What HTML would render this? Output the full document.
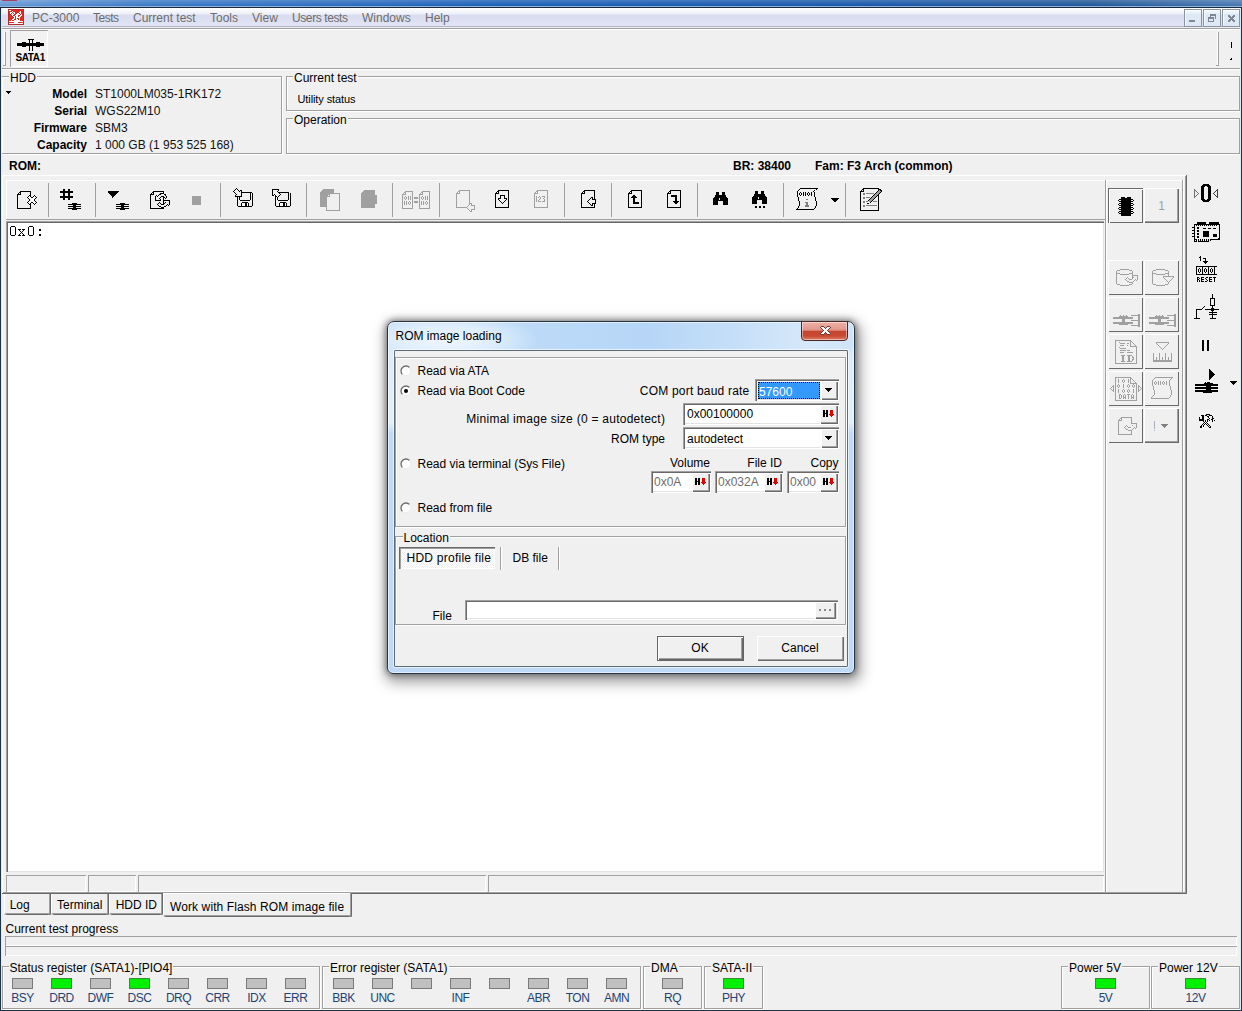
<!DOCTYPE html><html><head><meta charset="utf-8"><style>
html,body{margin:0;padding:0}
body{width:1242px;height:1011px;overflow:hidden;position:relative;background:#f0f0f0;font-family:"Liberation Sans",sans-serif}
body>div{position:absolute}
.t{white-space:pre}
</style></head><body>
<div style="left:0px;top:0px;width:1242px;height:7px;background:linear-gradient(180deg,rgba(255,255,255,.18),rgba(255,255,255,0) 5px,rgba(0,0,0,.06)),linear-gradient(90deg,#6a9bd6 0%,#3f7cc8 12%,#1f63b8 40%,#1c5aab 70%,#275b9a 88%,#4a7bb2 100%)"></div>
<div style="left:2px;top:0px;width:15px;height:1px;background:#a8406a"></div>
<div style="left:0px;top:6px;width:1242px;height:1px;background:#8db3e0"></div>
<div style="left:0px;top:7px;width:1242px;height:1px;background:#1b2a3c"></div>
<div style="left:2px;top:8px;width:1238px;height:18px;background:linear-gradient(180deg,#ffffff 0px,#f6f7fb 3px,#edf0f8 6px,#d9ddef 7px,#dbdff0 11px,#e1e5f4 18px)"></div>
<div style="left:2px;top:26px;width:1238px;height:1px;background:#b3b7c4"></div>
<div style="left:2px;top:27px;width:1238px;height:1px;background:#eceef4"></div>
<div style="left:2px;top:28px;width:1238px;height:1px;background:#a0a0a0"></div>
<div style="left:2px;top:29px;width:1238px;height:1px;background:#fff"></div>
<svg style="position:absolute;left:8px;top:9px" width="16" height="16" viewBox="0 0 16 16" shape-rendering="crispEdges"><path d="M0 0h16v1h-16zM0 1h1v1h-1zM15 1h1v1h-1zM0 2h1v1h-1zM15 2h1v1h-1zM0 3h1v1h-1zM15 3h1v1h-1zM0 4h1v1h-1zM15 4h1v1h-1zM0 5h1v1h-1zM15 5h1v1h-1zM0 6h1v1h-1zM15 6h1v1h-1zM0 7h1v1h-1zM15 7h1v1h-1zM0 8h1v1h-1zM15 8h1v1h-1zM0 9h1v1h-1zM15 9h1v1h-1zM0 10h1v1h-1zM15 10h1v1h-1zM0 11h1v1h-1zM15 11h1v1h-1zM0 12h1v1h-1zM15 12h1v1h-1zM0 13h1v1h-1zM15 13h1v1h-1zM0 14h1v1h-1zM15 14h1v1h-1zM0 15h16v1h-16z" fill="#b42e2a"/><path d="M1 1h2v1h-2zM4 2h1v1h-1zM12 2h1v1h-1zM2 3h2v1h-2zM5 3h2v1h-2zM11 3h2v1h-2zM2 4h1v1h-1zM4 4h1v1h-1zM6 4h1v1h-1zM9 4h2v1h-2zM12 4h1v1h-1zM3 5h3v1h-3zM8 5h4v1h-4zM13 5h1v1h-1zM4 6h1v1h-1zM7 6h3v1h-3zM12 6h2v1h-2zM5 7h2v1h-2zM8 7h2v1h-2zM11 7h2v1h-2zM6 8h1v1h-1zM8 8h4v1h-4zM5 9h2v1h-2zM8 9h1v1h-1zM11 9h1v1h-1zM4 10h2v1h-2zM8 10h2v1h-2zM11 10h1v1h-1zM3 11h1v1h-1zM6 11h6v1h-6zM1 12h14v1h-14zM6 13h4v1h-4zM1 14h14v1h-14z" fill="#fff"/><path d="M3 1h12v1h-12zM1 2h3v1h-3zM5 2h7v1h-7zM13 2h2v1h-2zM1 3h1v1h-1zM4 3h1v1h-1zM7 3h4v1h-4zM13 3h2v1h-2zM1 4h1v1h-1zM3 4h1v1h-1zM5 4h1v1h-1zM7 4h2v1h-2zM11 4h1v1h-1zM13 4h2v1h-2zM1 5h2v1h-2zM6 5h2v1h-2zM12 5h1v1h-1zM14 5h1v1h-1zM1 6h3v1h-3zM5 6h2v1h-2zM10 6h2v1h-2zM14 6h1v1h-1zM1 7h4v1h-4zM7 7h1v1h-1zM10 7h1v1h-1zM13 7h2v1h-2zM1 8h5v1h-5zM7 8h1v1h-1zM12 8h3v1h-3zM1 9h4v1h-4zM7 9h1v1h-1zM9 9h2v1h-2zM12 9h3v1h-3zM1 10h3v1h-3zM6 10h2v1h-2zM10 10h1v1h-1zM12 10h3v1h-3zM1 11h2v1h-2zM4 11h2v1h-2zM12 11h3v1h-3zM1 13h5v1h-5zM10 13h5v1h-5z" fill="#e4291e"/></svg>
<div class="t" style="left:32px;top:12.34px;font-size:12px;line-height:12px;font-weight:400;color:#6d6d6d;font-family:'Liberation Sans',sans-serif;letter-spacing:0px">PC-3000</div>
<div class="t" style="left:93px;top:12.34px;font-size:12px;line-height:12px;font-weight:400;color:#6d6d6d;font-family:'Liberation Sans',sans-serif;letter-spacing:-0.5px">Tests</div>
<div class="t" style="left:133px;top:12.34px;font-size:12px;line-height:12px;font-weight:400;color:#6d6d6d;font-family:'Liberation Sans',sans-serif;letter-spacing:0px">Current test</div>
<div class="t" style="left:210px;top:12.34px;font-size:12px;line-height:12px;font-weight:400;color:#6d6d6d;font-family:'Liberation Sans',sans-serif;letter-spacing:0px">Tools</div>
<div class="t" style="left:252px;top:12.34px;font-size:12px;line-height:12px;font-weight:400;color:#6d6d6d;font-family:'Liberation Sans',sans-serif;letter-spacing:0px">View</div>
<div class="t" style="left:292px;top:12.34px;font-size:12px;line-height:12px;font-weight:400;color:#6d6d6d;font-family:'Liberation Sans',sans-serif;letter-spacing:-0.4px">Users tests</div>
<div class="t" style="left:362px;top:12.34px;font-size:12px;line-height:12px;font-weight:400;color:#6d6d6d;font-family:'Liberation Sans',sans-serif;letter-spacing:0px">Windows</div>
<div class="t" style="left:425px;top:12.34px;font-size:12px;line-height:12px;font-weight:400;color:#6d6d6d;font-family:'Liberation Sans',sans-serif;letter-spacing:0px">Help</div>
<div style="left:1184px;top:9px;width:18px;height:18px;background:linear-gradient(180deg,#f4f8fd 0px,#eaf2fb 3px,#dfe9f6 4px,#dde8f5 100%);border:1px solid #8a949e;box-sizing:border-box;box-shadow:inset 1px 1px 0 rgba(255,255,255,.7)"></div>
<div style="left:1203px;top:9px;width:18px;height:18px;background:linear-gradient(180deg,#f4f8fd 0px,#eaf2fb 3px,#dfe9f6 4px,#dde8f5 100%);border:1px solid #8a949e;box-sizing:border-box;box-shadow:inset 1px 1px 0 rgba(255,255,255,.7)"></div>
<div style="left:1222px;top:9px;width:18px;height:18px;background:linear-gradient(180deg,#f4f8fd 0px,#eaf2fb 3px,#dfe9f6 4px,#dde8f5 100%);border:1px solid #8a949e;box-sizing:border-box;box-shadow:inset 1px 1px 0 rgba(255,255,255,.7)"></div>
<div style="left:1189px;top:20px;width:6px;height:2px;background:#7c8896"></div>
<svg style="position:absolute;left:1208px;top:14px" width="8" height="8" viewBox="0 0 8 8" shape-rendering="crispEdges"><path d="M2 0h6v1h-6zM2 1h6v1h-6zM2 2h1v1h-1zM7 2h1v1h-1zM0 3h6v1h-6zM7 3h1v1h-1zM0 4h6v1h-6zM7 4h1v1h-1zM0 5h1v1h-1zM5 5h1v1h-1zM0 6h1v1h-1zM5 6h1v1h-1zM0 7h6v1h-6z" fill="#7c8896"/></svg>
<svg style="position:absolute;left:1228px;top:15px" width="7" height="7" viewBox="0 0 7 7" shape-rendering="crispEdges"><path d="M0 0h2v1h-2zM5 0h2v1h-2zM0 1h3v1h-3zM4 1h3v1h-3zM1 2h5v1h-5zM2 3h3v1h-3zM1 4h5v1h-5zM0 5h3v1h-3zM4 5h3v1h-3zM0 6h2v1h-2zM5 6h2v1h-2z" fill="#7c8896"/></svg>
<div style="left:4px;top:32px;width:1px;height:34px;background:#fff"></div>
<div style="left:5px;top:32px;width:1px;height:34px;background:#a0a0a0"></div>
<div style="left:3px;top:65px;width:3px;height:1px;background:#a0a0a0"></div>
<div style="left:10px;top:30px;width:38px;height:37px;background:#f2f2f2;box-shadow:inset 1px 1px 0 #a0a0a0, inset -1px -1px 0 #fff"></div>
<svg style="position:absolute;left:17px;top:39px" width="27" height="12" viewBox="0 0 27 12" shape-rendering="crispEdges"><path d="M11 0h6v1h-6zM12 1h1v1h-1zM15 1h1v1h-1zM12 2h1v1h-1zM15 2h1v1h-1zM5 3h4v1h-4zM12 3h1v1h-1zM15 3h1v1h-1zM19 3h4v1h-4zM0 4h27v1h-27zM0 5h27v1h-27zM0 6h27v1h-27zM5 7h4v1h-4zM12 7h1v1h-1zM15 7h1v1h-1zM19 7h4v1h-4zM12 8h1v1h-1zM15 8h1v1h-1zM12 9h1v1h-1zM15 9h1v1h-1zM12 10h1v1h-1zM15 10h1v1h-1zM12 11h1v1h-1zM15 11h1v1h-1z" fill="#000"/></svg>
<div class="t" style="left:15.5px;top:52.53px;font-size:10px;line-height:10px;font-weight:700;color:#000;font-family:'Liberation Sans',sans-serif;letter-spacing:-0.4px">SATA1</div>
<div style="left:1217px;top:32px;width:1px;height:34px;background:#fff"></div>
<div style="left:1218px;top:32px;width:1px;height:34px;background:#a0a0a0"></div>
<div style="left:1216px;top:65px;width:3px;height:1px;background:#a0a0a0"></div>
<div style="left:1231px;top:42px;width:1px;height:6px;background:#000"></div>
<svg style="position:absolute;left:1230px;top:58px" width="2" height="2" viewBox="0 0 2 2" shape-rendering="crispEdges"><path d="M1 0h1v1h-1zM0 1h2v1h-2z" fill="#000"/></svg>
<div style="left:2px;top:68px;width:1238px;height:1px;background:#a0a0a0"></div>
<div style="left:2px;top:69px;width:1238px;height:1px;background:#fff"></div>
<div style="left:2px;top:77px;width:280px;height:77px;border:1px solid #fff;box-sizing:border-box;width:281px;height:78px"></div>
<div style="left:1px;top:76px;width:281px;height:78px;border:1px solid #a0a0a0;box-sizing:border-box"></div>
<div class="t" style="left:10px;top:71.84px;font-size:12px;line-height:12px;font-weight:400;color:#000;font-family:'Liberation Sans',sans-serif;background:#f0f0f0;padding:0 1px;margin-left:-1px">HDD</div>
<svg style="position:absolute;left:6px;top:91px" width="5" height="3" viewBox="0 0 5 3" shape-rendering="crispEdges"><path d="M0 0h5v1h-5zM1 1h3v1h-3zM2 2h1v1h-1z" fill="#000"/></svg>
<div class="t" style="right:1155px;top:87.54px;font-size:12px;line-height:12px;font-weight:700;color:#000;font-family:'Liberation Sans',sans-serif;">Model</div>
<div class="t" style="left:95px;top:87.54px;font-size:12px;line-height:12px;font-weight:400;color:#111;font-family:'Liberation Sans',sans-serif;">ST1000LM035-1RK172</div>
<div class="t" style="right:1155px;top:105.14px;font-size:12px;line-height:12px;font-weight:700;color:#000;font-family:'Liberation Sans',sans-serif;">Serial</div>
<div class="t" style="left:95px;top:105.14px;font-size:12px;line-height:12px;font-weight:400;color:#111;font-family:'Liberation Sans',sans-serif;">WGS22M10</div>
<div class="t" style="right:1155px;top:122.04px;font-size:12px;line-height:12px;font-weight:700;color:#000;font-family:'Liberation Sans',sans-serif;">Firmware</div>
<div class="t" style="left:95px;top:122.04px;font-size:12px;line-height:12px;font-weight:400;color:#111;font-family:'Liberation Sans',sans-serif;">SBM3</div>
<div class="t" style="right:1155px;top:138.84px;font-size:12px;line-height:12px;font-weight:700;color:#000;font-family:'Liberation Sans',sans-serif;">Capacity</div>
<div class="t" style="left:95px;top:138.84px;font-size:12px;line-height:12px;font-weight:400;color:#111;font-family:'Liberation Sans',sans-serif;">1 000 GB (1 953 525 168)</div>
<div style="left:287px;top:77px;width:953px;height:34px;border:1px solid #fff;box-sizing:border-box;width:954px;height:35px"></div>
<div style="left:286px;top:76px;width:954px;height:35px;border:1px solid #a0a0a0;box-sizing:border-box"></div>
<div class="t" style="left:294px;top:71.84px;font-size:12px;line-height:12px;font-weight:400;color:#000;font-family:'Liberation Sans',sans-serif;background:#f0f0f0;padding:0 1px;margin-left:-1px">Current test</div>
<div class="t" style="left:297.5px;top:94.19px;font-size:11px;line-height:11px;font-weight:400;color:#000;font-family:'Liberation Sans',sans-serif;letter-spacing:-0.1px">Utility status</div>
<div style="left:287px;top:119px;width:953px;height:35px;border:1px solid #fff;box-sizing:border-box;width:954px;height:36px"></div>
<div style="left:286px;top:118px;width:954px;height:36px;border:1px solid #a0a0a0;box-sizing:border-box"></div>
<div class="t" style="left:294px;top:113.84px;font-size:12px;line-height:12px;font-weight:400;color:#000;font-family:'Liberation Sans',sans-serif;background:#f0f0f0;padding:0 1px;margin-left:-1px">Operation</div>
<div class="t" style="left:9px;top:159.54px;font-size:12px;line-height:12px;font-weight:700;color:#000;font-family:'Liberation Sans',sans-serif;">ROM:</div>
<div class="t" style="left:733px;top:159.54px;font-size:12px;line-height:12px;font-weight:700;color:#000;font-family:'Liberation Sans',sans-serif;">BR: 38400</div>
<div class="t" style="left:815px;top:159.54px;font-size:12px;line-height:12px;font-weight:700;color:#000;font-family:'Liberation Sans',sans-serif;">Fam: F3 Arch (common)</div>
<div style="left:2px;top:175px;width:1185px;height:1px;background:#fff"></div>
<div style="left:2px;top:175px;width:1px;height:719px;background:#fff"></div>
<div style="left:1186px;top:175px;width:1px;height:719px;background:#696969"></div>
<div style="left:1185px;top:176px;width:1px;height:717px;background:#a0a0a0"></div>
<div style="left:2px;top:893px;width:1185px;height:1px;background:#696969"></div>
<div style="left:3px;top:892px;width:1183px;height:1px;background:#a0a0a0"></div>
<div style="left:6px;top:180px;width:1177px;height:1px;background:#fff"></div>
<div style="left:6px;top:180px;width:1px;height:41px;background:#fff"></div>
<div style="left:1182px;top:180px;width:1px;height:712px;background:#a0a0a0"></div>
<div style="left:1183px;top:180px;width:1px;height:712px;background:#fff"></div>
<div style="left:6px;top:221px;width:1098px;height:651px;background:#fff;box-shadow:inset 1px 1px 0 #a0a0a0, inset 2px 2px 0 #696969, inset -1px -1px 0 #e3e3e3"></div>
<div style="left:6px;top:219px;width:1099px;height:1px;background:#a0a0a0"></div>
<svg style="position:absolute;left:10px;top:226px" width="31" height="10" viewBox="0 0 31 10" shape-rendering="crispEdges"><path d="M1 0h4v1h-4zM19 0h4v1h-4zM0 1h1v1h-1zM5 1h1v1h-1zM18 1h1v1h-1zM23 1h1v1h-1zM0 2h1v1h-1zM5 2h1v1h-1zM18 2h1v1h-1zM23 2h1v1h-1zM0 3h1v1h-1zM5 3h1v1h-1zM8 3h3v1h-3zM12 3h3v1h-3zM18 3h1v1h-1zM23 3h1v1h-1zM29 3h2v1h-2zM0 4h1v1h-1zM5 4h1v1h-1zM9 4h1v1h-1zM13 4h1v1h-1zM18 4h1v1h-1zM23 4h1v1h-1zM29 4h2v1h-2zM0 5h1v1h-1zM5 5h1v1h-1zM10 5h1v1h-1zM12 5h1v1h-1zM18 5h1v1h-1zM23 5h1v1h-1zM0 6h1v1h-1zM5 6h1v1h-1zM11 6h1v1h-1zM18 6h1v1h-1zM23 6h1v1h-1zM0 7h1v1h-1zM5 7h1v1h-1zM10 7h1v1h-1zM12 7h1v1h-1zM18 7h1v1h-1zM23 7h1v1h-1zM0 8h1v1h-1zM5 8h1v1h-1zM9 8h1v1h-1zM13 8h1v1h-1zM18 8h1v1h-1zM23 8h1v1h-1zM29 8h2v1h-2zM1 9h4v1h-4zM8 9h3v1h-3zM12 9h3v1h-3zM19 9h4v1h-4zM29 9h2v1h-2z" fill="#000"/></svg>
<div style="left:6px;top:875px;width:80px;height:17px;background:#f0f0f0;box-shadow:inset 1px 1px 0 #a0a0a0, inset -1px -1px 0 #fff"></div>
<div style="left:88px;top:875px;width:48px;height:17px;background:#f0f0f0;box-shadow:inset 1px 1px 0 #a0a0a0, inset -1px -1px 0 #fff"></div>
<div style="left:138px;top:875px;width:348px;height:17px;background:#f0f0f0;box-shadow:inset 1px 1px 0 #a0a0a0, inset -1px -1px 0 #fff"></div>
<div style="left:488px;top:875px;width:616px;height:17px;background:#f0f0f0;box-shadow:inset 1px 1px 0 #a0a0a0, inset -1px -1px 0 #fff"></div>
<div style="left:1105px;top:180px;width:1px;height:712px;background:#a0a0a0"></div>
<div style="left:1106px;top:180px;width:1px;height:712px;background:#fff"></div>
<div style="left:4px;top:894px;width:47px;height:21px;background:#f0f0f0;border-radius:0 0 2px 2px;box-shadow:inset 1px 0 0 #fff, inset -1px 0 0 #696969, inset -2px 0 0 #a0a0a0, inset 0 -1px 0 #696969, inset 0 -2px 0 #a0a0a0"></div>
<div class="t" style="left:9.7px;top:898.54px;font-size:12px;line-height:12px;font-weight:400;color:#000;font-family:'Liberation Sans',sans-serif;">Log</div>
<div style="left:51px;top:894px;width:58px;height:21px;background:#f0f0f0;border-radius:0 0 2px 2px;box-shadow:inset 1px 0 0 #fff, inset -1px 0 0 #696969, inset -2px 0 0 #a0a0a0, inset 0 -1px 0 #696969, inset 0 -2px 0 #a0a0a0"></div>
<div class="t" style="left:57px;top:898.54px;font-size:12px;line-height:12px;font-weight:400;color:#000;font-family:'Liberation Sans',sans-serif;">Terminal</div>
<div style="left:109px;top:894px;width:54px;height:21px;background:#f0f0f0;border-radius:0 0 2px 2px;box-shadow:inset 1px 0 0 #fff, inset -1px 0 0 #696969, inset -2px 0 0 #a0a0a0, inset 0 -1px 0 #696969, inset 0 -2px 0 #a0a0a0"></div>
<div class="t" style="left:115.7px;top:899.14px;font-size:12px;line-height:12px;font-weight:400;color:#000;font-family:'Liberation Sans',sans-serif;">HDD ID</div>
<div style="left:163px;top:893px;width:189px;height:24px;background:#f0f0f0;border-radius:0 0 2px 2px;box-shadow:inset 1px 0 0 #fff, inset -1px 0 0 #696969, inset -2px 0 0 #a0a0a0, inset 0 -1px 0 #696969, inset 0 -2px 0 #a0a0a0"></div>
<div style="left:164px;top:893px;width:186px;height:1px;background:#fff"></div>
<div class="t" style="left:170px;top:901.14px;font-size:12px;line-height:12px;font-weight:400;color:#000;font-family:'Liberation Sans',sans-serif;letter-spacing:0.1px">Work with Flash ROM image file</div>
<div class="t" style="left:5.5px;top:922.64px;font-size:12px;line-height:12px;font-weight:400;color:#000;font-family:'Liberation Sans',sans-serif;">Current test progress</div>
<div style="left:5px;top:936px;width:1232px;height:10px;background:#f0f0f0;box-shadow:inset 1px 1px 0 #a0a0a0, inset -1px -1px 0 #fff"></div>
<div style="left:5px;top:946px;width:1232px;height:10px;background:#f0f0f0;box-shadow:inset 1px 1px 0 #a0a0a0, inset -1px -1px 0 #fff"></div>
<div style="left:3px;top:967px;width:317px;height:42px;border:1px solid #fff;box-sizing:border-box;width:318px;height:43px"></div>
<div style="left:2px;top:966px;width:318px;height:43px;border:1px solid #a0a0a0;box-sizing:border-box"></div>
<div class="t" style="left:9.5px;top:961.54px;font-size:12px;line-height:12px;font-weight:400;color:#000;font-family:'Liberation Sans',sans-serif;background:#f0f0f0;padding:0 1px;margin-left:-1px">Status register (SATA1)-[PIO4]</div>
<div style="left:12px;top:978px;width:21px;height:11px;background:#c0c0c0;border:1px solid #7a7a7a;box-sizing:border-box"></div>
<div class="t" style="left:-177.5px;width:400px;text-align:center;top:992.04px;font-size:12px;line-height:12px;font-weight:400;color:#1e4476;font-family:'Liberation Sans',sans-serif;letter-spacing:-0.5px">BSY</div>
<div style="left:51px;top:978px;width:21px;height:11px;background:#00f000;border:1px solid #3a8a3a;box-sizing:border-box"></div>
<div class="t" style="left:-138.5px;width:400px;text-align:center;top:992.04px;font-size:12px;line-height:12px;font-weight:400;color:#1e4476;font-family:'Liberation Sans',sans-serif;letter-spacing:-0.5px">DRD</div>
<div style="left:90px;top:978px;width:21px;height:11px;background:#c0c0c0;border:1px solid #7a7a7a;box-sizing:border-box"></div>
<div class="t" style="left:-99.5px;width:400px;text-align:center;top:992.04px;font-size:12px;line-height:12px;font-weight:400;color:#1e4476;font-family:'Liberation Sans',sans-serif;letter-spacing:-0.5px">DWF</div>
<div style="left:129px;top:978px;width:21px;height:11px;background:#00f000;border:1px solid #3a8a3a;box-sizing:border-box"></div>
<div class="t" style="left:-60.5px;width:400px;text-align:center;top:992.04px;font-size:12px;line-height:12px;font-weight:400;color:#1e4476;font-family:'Liberation Sans',sans-serif;letter-spacing:-0.5px">DSC</div>
<div style="left:168px;top:978px;width:21px;height:11px;background:#c0c0c0;border:1px solid #7a7a7a;box-sizing:border-box"></div>
<div class="t" style="left:-21.5px;width:400px;text-align:center;top:992.04px;font-size:12px;line-height:12px;font-weight:400;color:#1e4476;font-family:'Liberation Sans',sans-serif;letter-spacing:-0.5px">DRQ</div>
<div style="left:207px;top:978px;width:21px;height:11px;background:#c0c0c0;border:1px solid #7a7a7a;box-sizing:border-box"></div>
<div class="t" style="left:17.5px;width:400px;text-align:center;top:992.04px;font-size:12px;line-height:12px;font-weight:400;color:#1e4476;font-family:'Liberation Sans',sans-serif;letter-spacing:-0.5px">CRR</div>
<div style="left:246px;top:978px;width:21px;height:11px;background:#c0c0c0;border:1px solid #7a7a7a;box-sizing:border-box"></div>
<div class="t" style="left:56.5px;width:400px;text-align:center;top:992.04px;font-size:12px;line-height:12px;font-weight:400;color:#1e4476;font-family:'Liberation Sans',sans-serif;letter-spacing:-0.5px">IDX</div>
<div style="left:285px;top:978px;width:21px;height:11px;background:#c0c0c0;border:1px solid #7a7a7a;box-sizing:border-box"></div>
<div class="t" style="left:95.5px;width:400px;text-align:center;top:992.04px;font-size:12px;line-height:12px;font-weight:400;color:#1e4476;font-family:'Liberation Sans',sans-serif;letter-spacing:-0.5px">ERR</div>
<div style="left:323px;top:967px;width:318px;height:42px;border:1px solid #fff;box-sizing:border-box;width:319px;height:43px"></div>
<div style="left:322px;top:966px;width:319px;height:43px;border:1px solid #a0a0a0;box-sizing:border-box"></div>
<div class="t" style="left:330px;top:961.54px;font-size:12px;line-height:12px;font-weight:400;color:#000;font-family:'Liberation Sans',sans-serif;background:#f0f0f0;padding:0 1px;margin-left:-1px">Error register (SATA1)</div>
<div style="left:333px;top:978px;width:21px;height:11px;background:#c0c0c0;border:1px solid #7a7a7a;box-sizing:border-box"></div>
<div class="t" style="left:143.5px;width:400px;text-align:center;top:992.04px;font-size:12px;line-height:12px;font-weight:400;color:#1e4476;font-family:'Liberation Sans',sans-serif;letter-spacing:-0.5px">BBK</div>
<div style="left:372px;top:978px;width:21px;height:11px;background:#c0c0c0;border:1px solid #7a7a7a;box-sizing:border-box"></div>
<div class="t" style="left:182.5px;width:400px;text-align:center;top:992.04px;font-size:12px;line-height:12px;font-weight:400;color:#1e4476;font-family:'Liberation Sans',sans-serif;letter-spacing:-0.5px">UNC</div>
<div style="left:411px;top:978px;width:21px;height:11px;background:#c0c0c0;border:1px solid #7a7a7a;box-sizing:border-box"></div>
<div style="left:450px;top:978px;width:21px;height:11px;background:#c0c0c0;border:1px solid #7a7a7a;box-sizing:border-box"></div>
<div class="t" style="left:260.5px;width:400px;text-align:center;top:992.04px;font-size:12px;line-height:12px;font-weight:400;color:#1e4476;font-family:'Liberation Sans',sans-serif;letter-spacing:-0.5px">INF</div>
<div style="left:489px;top:978px;width:21px;height:11px;background:#c0c0c0;border:1px solid #7a7a7a;box-sizing:border-box"></div>
<div style="left:528px;top:978px;width:21px;height:11px;background:#c0c0c0;border:1px solid #7a7a7a;box-sizing:border-box"></div>
<div class="t" style="left:338.5px;width:400px;text-align:center;top:992.04px;font-size:12px;line-height:12px;font-weight:400;color:#1e4476;font-family:'Liberation Sans',sans-serif;letter-spacing:-0.5px">ABR</div>
<div style="left:567px;top:978px;width:21px;height:11px;background:#c0c0c0;border:1px solid #7a7a7a;box-sizing:border-box"></div>
<div class="t" style="left:377.5px;width:400px;text-align:center;top:992.04px;font-size:12px;line-height:12px;font-weight:400;color:#1e4476;font-family:'Liberation Sans',sans-serif;letter-spacing:-0.5px">TON</div>
<div style="left:606px;top:978px;width:21px;height:11px;background:#c0c0c0;border:1px solid #7a7a7a;box-sizing:border-box"></div>
<div class="t" style="left:416.5px;width:400px;text-align:center;top:992.04px;font-size:12px;line-height:12px;font-weight:400;color:#1e4476;font-family:'Liberation Sans',sans-serif;letter-spacing:-0.5px">AMN</div>
<div style="left:644px;top:967px;width:58px;height:42px;border:1px solid #fff;box-sizing:border-box;width:59px;height:43px"></div>
<div style="left:643px;top:966px;width:59px;height:43px;border:1px solid #a0a0a0;box-sizing:border-box"></div>
<div class="t" style="left:651px;top:961.54px;font-size:12px;line-height:12px;font-weight:400;color:#000;font-family:'Liberation Sans',sans-serif;background:#f0f0f0;padding:0 1px;margin-left:-1px">DMA</div>
<div style="left:662px;top:978px;width:21px;height:11px;background:#c0c0c0;border:1px solid #7a7a7a;box-sizing:border-box"></div>
<div class="t" style="left:472.5px;width:400px;text-align:center;top:992.04px;font-size:12px;line-height:12px;font-weight:400;color:#1e4476;font-family:'Liberation Sans',sans-serif;letter-spacing:-0.5px">RQ</div>
<div style="left:705px;top:967px;width:58px;height:42px;border:1px solid #fff;box-sizing:border-box;width:59px;height:43px"></div>
<div style="left:704px;top:966px;width:59px;height:43px;border:1px solid #a0a0a0;box-sizing:border-box"></div>
<div class="t" style="left:712px;top:961.54px;font-size:12px;line-height:12px;font-weight:400;color:#000;font-family:'Liberation Sans',sans-serif;background:#f0f0f0;padding:0 1px;margin-left:-1px">SATA-II</div>
<div style="left:723px;top:978px;width:21px;height:11px;background:#00f000;border:1px solid #3a8a3a;box-sizing:border-box"></div>
<div class="t" style="left:533.5px;width:400px;text-align:center;top:992.04px;font-size:12px;line-height:12px;font-weight:400;color:#1e4476;font-family:'Liberation Sans',sans-serif;letter-spacing:-0.5px">PHY</div>
<div style="left:1062px;top:967px;width:88px;height:42px;border:1px solid #fff;box-sizing:border-box;width:89px;height:43px"></div>
<div style="left:1061px;top:966px;width:89px;height:43px;border:1px solid #a0a0a0;box-sizing:border-box"></div>
<div class="t" style="left:1069px;top:961.54px;font-size:12px;line-height:12px;font-weight:400;color:#000;font-family:'Liberation Sans',sans-serif;background:#f0f0f0;padding:0 1px;margin-left:-1px">Power 5V</div>
<div style="left:1095px;top:978px;width:21px;height:11px;background:#00f000;border:1px solid #3a8a3a;box-sizing:border-box"></div>
<div class="t" style="left:905.5px;width:400px;text-align:center;top:992.04px;font-size:12px;line-height:12px;font-weight:400;color:#1e4476;font-family:'Liberation Sans',sans-serif;letter-spacing:-0.5px">5V</div>
<div style="left:1152px;top:967px;width:88px;height:42px;border:1px solid #fff;box-sizing:border-box;width:89px;height:43px"></div>
<div style="left:1151px;top:966px;width:89px;height:43px;border:1px solid #a0a0a0;box-sizing:border-box"></div>
<div class="t" style="left:1159px;top:961.54px;font-size:12px;line-height:12px;font-weight:400;color:#000;font-family:'Liberation Sans',sans-serif;background:#f0f0f0;padding:0 1px;margin-left:-1px">Power 12V</div>
<div style="left:1185px;top:978px;width:21px;height:11px;background:#00f000;border:1px solid #3a8a3a;box-sizing:border-box"></div>
<div class="t" style="left:995.5px;width:400px;text-align:center;top:992.04px;font-size:12px;line-height:12px;font-weight:400;color:#1e4476;font-family:'Liberation Sans',sans-serif;letter-spacing:-0.5px">12V</div>
<div style="left:48px;top:183px;width:1px;height:34px;background:#a0a0a0"></div>
<div style="left:95px;top:183px;width:1px;height:34px;background:#a0a0a0"></div>
<div style="left:220px;top:183px;width:1px;height:34px;background:#a0a0a0"></div>
<div style="left:306px;top:183px;width:1px;height:34px;background:#a0a0a0"></div>
<div style="left:392px;top:183px;width:1px;height:34px;background:#a0a0a0"></div>
<div style="left:439px;top:183px;width:1px;height:34px;background:#a0a0a0"></div>
<div style="left:564px;top:183px;width:1px;height:34px;background:#a0a0a0"></div>
<div style="left:611px;top:183px;width:1px;height:34px;background:#a0a0a0"></div>
<div style="left:697px;top:183px;width:1px;height:34px;background:#a0a0a0"></div>
<div style="left:783px;top:183px;width:1px;height:34px;background:#a0a0a0"></div>
<div style="left:845px;top:183px;width:1px;height:34px;background:#a0a0a0"></div>
<svg style="position:absolute;left:17px;top:191px" width="20" height="18" viewBox="0 0 20 18" shape-rendering="crispEdges"><path d="M3 0h11v1h-11zM2 1h2v1h-2zM13 1h1v1h-1zM1 2h1v1h-1zM3 2h1v1h-1zM13 2h1v1h-1zM0 3h4v1h-4zM13 3h1v1h-1zM0 4h1v1h-1zM12 4h2v1h-2zM17 4h1v1h-1zM0 5h1v1h-1zM11 5h1v1h-1zM13 5h1v1h-1zM16 5h1v1h-1zM18 5h1v1h-1zM0 6h1v1h-1zM10 6h1v1h-1zM14 6h2v1h-2zM19 6h1v1h-1zM0 7h1v1h-1zM11 7h1v1h-1zM18 7h1v1h-1zM0 8h1v1h-1zM12 8h1v1h-1zM17 8h1v1h-1zM0 9h1v1h-1zM12 9h1v1h-1zM17 9h1v1h-1zM0 10h1v1h-1zM11 10h1v1h-1zM18 10h1v1h-1zM0 11h1v1h-1zM10 11h1v1h-1zM14 11h2v1h-2zM19 11h1v1h-1zM0 12h1v1h-1zM11 12h1v1h-1zM13 12h1v1h-1zM16 12h1v1h-1zM18 12h1v1h-1zM0 13h1v1h-1zM12 13h2v1h-2zM17 13h1v1h-1zM0 14h1v1h-1zM13 14h1v1h-1zM0 15h1v1h-1zM13 15h1v1h-1zM0 16h1v1h-1zM13 16h1v1h-1zM0 17h14v1h-14z" fill="#000"/><path d="M2 2h1v1h-1zM12 5h1v1h-1zM17 5h1v1h-1zM11 6h3v1h-3zM16 6h3v1h-3zM12 7h6v1h-6zM13 8h4v1h-4zM13 9h4v1h-4zM12 10h6v1h-6zM11 11h3v1h-3zM16 11h3v1h-3zM12 12h1v1h-1zM17 12h1v1h-1z" fill="#fff"/></svg>
<svg style="position:absolute;left:56px;top:186px;" width="28" height="26" viewBox="0 0 28 26" shape-rendering="crispEdges"><path d="M7 3h2v11H7zM12 3h2v11h-2zM4 5h13v2H4zM4 10h13v2H4z" fill="#000"/><path d="M16 17h5v1h-5zM12 18h13v1H12zM17 19h3v1h-3zM12 20h13v1H12zM17 21h3v1h-3zM12 22h13v1H12zM16 23h5v1h-5z" fill="#000"/></svg>
<svg style="position:absolute;left:104px;top:186px;" width="28" height="26" viewBox="0 0 28 26" shape-rendering="crispEdges"><path d="M4 5h11v1h-1v1h-1v1h-1v1h-1v1h-1v1h-1v1h-1v-1H8v-1H7V9H6V8H5V7H4z" fill="#000"/><path d="M16 17h5v1h-5zM12 18h13v1H12zM17 19h3v1h-3zM12 20h13v1H12zM17 21h3v1h-3zM12 22h13v1H12zM16 23h5v1h-5z" fill="#000"/></svg>
<svg style="position:absolute;left:148px;top:191px" width="22" height="18" viewBox="0 0 22 18" shape-rendering="crispEdges"><path d="M5 0h11v1h-11zM4 1h2v1h-2zM15 1h1v1h-1zM3 2h1v1h-1zM5 2h1v1h-1zM12 2h4v1h-4zM2 3h4v1h-4zM11 3h2v1h-2zM16 3h2v1h-2zM2 4h1v1h-1zM8 4h1v1h-1zM10 4h1v1h-1zM17 4h1v1h-1zM2 5h1v1h-1zM7 5h1v1h-1zM9 5h1v1h-1zM13 5h3v1h-3zM18 5h1v1h-1zM2 6h1v1h-1zM7 6h1v1h-1zM12 6h1v1h-1zM15 6h2v1h-2zM18 6h1v1h-1zM2 7h1v1h-1zM7 7h1v1h-1zM11 7h1v1h-1zM15 7h1v1h-1zM17 7h1v1h-1zM2 8h1v1h-1zM7 8h1v1h-1zM12 8h1v1h-1zM15 8h1v1h-1zM2 9h1v1h-1zM7 9h6v1h-6zM15 9h7v1h-7zM2 10h1v1h-1zM15 10h1v1h-1zM21 10h1v1h-1zM2 11h1v1h-1zM11 11h1v1h-1zM15 11h1v1h-1zM17 11h1v1h-1zM21 11h1v1h-1zM2 12h1v1h-1zM10 12h1v1h-1zM12 12h1v1h-1zM15 12h2v1h-2zM21 12h1v1h-1zM2 13h1v1h-1zM9 13h1v1h-1zM13 13h3v1h-3zM19 13h1v1h-1zM21 13h1v1h-1zM2 14h1v1h-1zM10 14h1v1h-1zM18 14h1v1h-1zM20 14h1v1h-1zM2 15h1v1h-1zM11 15h2v1h-2zM16 15h2v1h-2zM2 16h1v1h-1zM13 16h3v1h-3zM2 17h14v1h-14z" fill="#000"/><path d="M4 2h1v1h-1zM16 11h1v1h-1z" fill="#fff"/></svg>
<div style="left:192px;top:196px;width:9px;height:9px;background:#a0a0a0"></div>
<svg style="position:absolute;left:230px;top:188px" width="24" height="19" viewBox="0 0 24 19" shape-rendering="crispEdges"><path d="M6 0h1v1h-1zM5 1h1v1h-1zM7 1h1v1h-1zM4 2h1v1h-1zM8 2h1v1h-1zM10 2h2v1h-2zM3 3h1v1h-1zM9 3h1v1h-1zM11 3h1v1h-1zM4 4h1v1h-1zM11 4h11v1h-11zM5 5h1v1h-1zM11 5h1v1h-1zM20 5h1v1h-1zM22 5h1v1h-1zM6 6h1v1h-1zM11 6h1v1h-1zM20 6h1v1h-1zM22 6h1v1h-1zM5 7h1v1h-1zM11 7h1v1h-1zM20 7h1v1h-1zM22 7h1v1h-1zM5 8h7v1h-7zM20 8h1v1h-1zM22 8h1v1h-1zM7 9h1v1h-1zM9 9h1v1h-1zM20 9h1v1h-1zM22 9h1v1h-1zM7 10h1v1h-1zM9 10h1v1h-1zM20 10h1v1h-1zM22 10h1v1h-1zM7 11h1v1h-1zM9 11h1v1h-1zM20 11h1v1h-1zM22 11h1v1h-1zM7 12h1v1h-1zM10 12h10v1h-10zM22 12h1v1h-1zM7 13h1v1h-1zM22 13h1v1h-1zM7 14h1v1h-1zM12 14h6v1h-6zM22 14h1v1h-1zM7 15h1v1h-1zM11 15h1v1h-1zM15 15h2v1h-2zM18 15h1v1h-1zM22 15h1v1h-1zM7 16h1v1h-1zM11 16h1v1h-1zM15 16h2v1h-2zM18 16h1v1h-1zM22 16h1v1h-1zM7 17h1v1h-1zM11 17h1v1h-1zM15 17h2v1h-2zM18 17h1v1h-1zM22 17h1v1h-1zM8 18h14v1h-14z" fill="#000"/><path d="M12 15h3v1h-3zM17 15h1v1h-1zM12 16h3v1h-3zM17 16h1v1h-1zM12 17h3v1h-3zM17 17h1v1h-1z" fill="#fff"/></svg>
<svg style="position:absolute;left:269px;top:189px" width="23" height="18" viewBox="0 0 23 18" shape-rendering="crispEdges"><path d="M3 0h7v1h-7zM3 1h1v1h-1zM9 1h1v1h-1zM3 2h1v1h-1zM8 2h1v1h-1zM3 3h1v1h-1zM9 3h11v1h-11zM3 4h1v1h-1zM10 4h1v1h-1zM19 4h1v1h-1zM21 4h1v1h-1zM3 5h1v1h-1zM5 5h1v1h-1zM11 5h1v1h-1zM19 5h1v1h-1zM21 5h1v1h-1zM3 6h2v1h-2zM6 6h1v1h-1zM10 6h1v1h-1zM19 6h1v1h-1zM21 6h1v1h-1zM6 7h2v1h-2zM9 7h1v1h-1zM19 7h1v1h-1zM21 7h1v1h-1zM6 8h1v1h-1zM8 8h1v1h-1zM19 8h1v1h-1zM21 8h1v1h-1zM6 9h1v1h-1zM8 9h1v1h-1zM19 9h1v1h-1zM21 9h1v1h-1zM6 10h1v1h-1zM8 10h1v1h-1zM19 10h1v1h-1zM21 10h1v1h-1zM6 11h1v1h-1zM9 11h10v1h-10zM21 11h1v1h-1zM6 12h1v1h-1zM21 12h1v1h-1zM6 13h1v1h-1zM11 13h6v1h-6zM21 13h1v1h-1zM6 14h1v1h-1zM10 14h1v1h-1zM14 14h2v1h-2zM17 14h1v1h-1zM21 14h1v1h-1zM6 15h1v1h-1zM10 15h1v1h-1zM14 15h2v1h-2zM17 15h1v1h-1zM21 15h1v1h-1zM6 16h1v1h-1zM10 16h1v1h-1zM14 16h2v1h-2zM17 16h1v1h-1zM21 16h1v1h-1zM7 17h14v1h-14z" fill="#000"/><path d="M11 14h3v1h-3zM16 14h1v1h-1zM11 15h3v1h-3zM16 15h1v1h-1zM11 16h3v1h-3zM16 16h1v1h-1z" fill="#fff"/></svg>
<svg style="position:absolute;left:317px;top:189px" width="23" height="22" viewBox="0 0 23 22" shape-rendering="crispEdges"><path d="M6 0h11v1h-11zM5 1h12v1h-12zM4 2h13v1h-13zM3 3h14v1h-14zM3 4h20v1h-20zM3 5h10v1h-10zM22 5h1v1h-1zM3 6h8v1h-8zM12 6h1v1h-1zM22 6h1v1h-1zM3 7h10v1h-10zM22 7h1v1h-1zM3 8h7v1h-7zM22 8h1v1h-1zM3 9h7v1h-7zM22 9h1v1h-1zM3 10h7v1h-7zM22 10h1v1h-1zM3 11h7v1h-7zM22 11h1v1h-1zM3 12h7v1h-7zM22 12h1v1h-1zM3 13h7v1h-7zM22 13h1v1h-1zM3 14h7v1h-7zM22 14h1v1h-1zM3 15h7v1h-7zM22 15h1v1h-1zM3 16h7v1h-7zM22 16h1v1h-1zM3 17h7v1h-7zM22 17h1v1h-1zM9 18h1v1h-1zM22 18h1v1h-1zM9 19h1v1h-1zM22 19h1v1h-1zM9 20h1v1h-1zM22 20h1v1h-1zM9 21h14v1h-14z" fill="#a0a0a0"/><path d="M11 6h1v1h-1z" fill="#fff"/></svg>
<svg style="position:absolute;left:361px;top:190px" width="16" height="18" viewBox="0 0 16 18" shape-rendering="crispEdges"><path d="M3 0h11v1h-11zM2 1h12v1h-12zM1 2h13v1h-13zM0 3h14v1h-14zM0 4h14v1h-14zM0 5h16v1h-16zM0 6h16v1h-16zM0 7h16v1h-16zM0 8h16v1h-16zM0 9h16v1h-16zM0 10h16v1h-16zM0 11h16v1h-16zM0 12h16v1h-16zM0 13h16v1h-16zM0 14h14v1h-14zM0 15h14v1h-14zM0 16h14v1h-14zM0 17h14v1h-14z" fill="#a0a0a0"/></svg>
<svg style="position:absolute;left:400px;top:191px" width="30" height="18" viewBox="0 0 30 18" shape-rendering="crispEdges"><path d="M5 0h8v1h-8zM22 0h8v1h-8zM4 1h2v1h-2zM12 1h1v1h-1zM21 1h2v1h-2zM29 1h1v1h-1zM3 2h1v1h-1zM5 2h1v1h-1zM12 2h1v1h-1zM20 2h1v1h-1zM22 2h1v1h-1zM29 2h1v1h-1zM2 3h4v1h-4zM12 3h1v1h-1zM19 3h4v1h-4zM29 3h1v1h-1zM2 4h1v1h-1zM12 4h1v1h-1zM19 4h1v1h-1zM29 4h1v1h-1zM2 5h1v1h-1zM5 5h1v1h-1zM8 5h1v1h-1zM10 5h1v1h-1zM12 5h1v1h-1zM19 5h1v1h-1zM22 5h1v1h-1zM25 5h1v1h-1zM27 5h1v1h-1zM29 5h1v1h-1zM2 6h1v1h-1zM4 6h1v1h-1zM6 6h1v1h-1zM8 6h1v1h-1zM10 6h1v1h-1zM12 6h1v1h-1zM14 6h4v1h-4zM19 6h1v1h-1zM21 6h1v1h-1zM23 6h1v1h-1zM25 6h1v1h-1zM27 6h1v1h-1zM29 6h1v1h-1zM2 7h1v1h-1zM4 7h1v1h-1zM6 7h1v1h-1zM8 7h1v1h-1zM10 7h1v1h-1zM12 7h1v1h-1zM14 7h4v1h-4zM19 7h1v1h-1zM21 7h1v1h-1zM23 7h1v1h-1zM25 7h1v1h-1zM27 7h1v1h-1zM29 7h1v1h-1zM2 8h1v1h-1zM5 8h1v1h-1zM8 8h1v1h-1zM10 8h1v1h-1zM12 8h1v1h-1zM19 8h1v1h-1zM22 8h1v1h-1zM25 8h1v1h-1zM27 8h1v1h-1zM29 8h1v1h-1zM2 9h1v1h-1zM12 9h1v1h-1zM19 9h1v1h-1zM29 9h1v1h-1zM2 10h1v1h-1zM4 10h1v1h-1zM6 10h1v1h-1zM9 10h1v1h-1zM12 10h1v1h-1zM14 10h4v1h-4zM19 10h1v1h-1zM21 10h1v1h-1zM23 10h1v1h-1zM26 10h1v1h-1zM29 10h1v1h-1zM2 11h1v1h-1zM4 11h1v1h-1zM6 11h1v1h-1zM8 11h1v1h-1zM10 11h1v1h-1zM12 11h1v1h-1zM14 11h4v1h-4zM19 11h1v1h-1zM21 11h1v1h-1zM23 11h1v1h-1zM25 11h1v1h-1zM27 11h1v1h-1zM29 11h1v1h-1zM2 12h1v1h-1zM4 12h1v1h-1zM6 12h1v1h-1zM8 12h1v1h-1zM10 12h1v1h-1zM12 12h1v1h-1zM19 12h1v1h-1zM21 12h1v1h-1zM23 12h1v1h-1zM25 12h1v1h-1zM27 12h1v1h-1zM29 12h1v1h-1zM2 13h1v1h-1zM4 13h1v1h-1zM6 13h1v1h-1zM9 13h1v1h-1zM12 13h1v1h-1zM19 13h1v1h-1zM21 13h1v1h-1zM23 13h1v1h-1zM26 13h1v1h-1zM29 13h1v1h-1zM2 14h1v1h-1zM12 14h1v1h-1zM19 14h1v1h-1zM29 14h1v1h-1zM2 15h1v1h-1zM12 15h1v1h-1zM19 15h1v1h-1zM29 15h1v1h-1zM2 16h1v1h-1zM12 16h1v1h-1zM19 16h1v1h-1zM29 16h1v1h-1zM2 17h11v1h-11zM19 17h11v1h-11z" fill="#a0a0a0"/><path d="M4 2h1v1h-1zM21 2h1v1h-1z" fill="#fff"/></svg>
<svg style="position:absolute;left:456px;top:190px" width="19" height="22" viewBox="0 0 19 22" shape-rendering="crispEdges"><path d="M3 0h11v1h-11zM2 1h2v1h-2zM13 1h1v1h-1zM1 2h1v1h-1zM3 2h1v1h-1zM13 2h1v1h-1zM0 3h4v1h-4zM13 3h1v1h-1zM0 4h1v1h-1zM13 4h1v1h-1zM0 5h1v1h-1zM13 5h1v1h-1zM0 6h1v1h-1zM13 6h1v1h-1zM0 7h1v1h-1zM13 7h1v1h-1zM0 8h1v1h-1zM13 8h1v1h-1zM0 9h1v1h-1zM13 9h1v1h-1zM0 10h1v1h-1zM13 10h1v1h-1zM0 11h1v1h-1zM13 11h1v1h-1zM0 12h1v1h-1zM13 12h1v1h-1zM0 13h1v1h-1zM13 13h3v1h-3zM0 14h1v1h-1zM13 14h1v1h-1zM15 14h1v1h-1zM0 15h1v1h-1zM12 15h1v1h-1zM15 15h4v1h-4zM0 16h1v1h-1zM11 16h1v1h-1zM18 16h1v1h-1zM0 17h11v1h-11zM18 17h1v1h-1zM11 18h1v1h-1zM18 18h1v1h-1zM12 19h1v1h-1zM15 19h4v1h-4zM13 20h1v1h-1zM15 20h1v1h-1zM14 21h2v1h-2z" fill="#a0a0a0"/><path d="M2 2h1v1h-1z" fill="#fff"/></svg>
<svg style="position:absolute;left:495px;top:190px" width="14" height="18" viewBox="0 0 14 18" shape-rendering="crispEdges"><path d="M3 0h11v1h-11zM2 1h2v1h-2zM13 1h1v1h-1zM1 2h1v1h-1zM3 2h1v1h-1zM13 2h1v1h-1zM0 3h4v1h-4zM13 3h1v1h-1zM0 4h1v1h-1zM13 4h1v1h-1zM0 5h1v1h-1zM5 5h5v1h-5zM13 5h1v1h-1zM0 6h1v1h-1zM5 6h1v1h-1zM9 6h1v1h-1zM13 6h1v1h-1zM0 7h1v1h-1zM5 7h1v1h-1zM9 7h1v1h-1zM13 7h1v1h-1zM0 8h1v1h-1zM3 8h3v1h-3zM9 8h3v1h-3zM13 8h1v1h-1zM0 9h1v1h-1zM3 9h1v1h-1zM11 9h1v1h-1zM13 9h1v1h-1zM0 10h1v1h-1zM4 10h1v1h-1zM10 10h1v1h-1zM13 10h1v1h-1zM0 11h1v1h-1zM5 11h1v1h-1zM9 11h1v1h-1zM13 11h1v1h-1zM0 12h1v1h-1zM6 12h1v1h-1zM8 12h1v1h-1zM13 12h1v1h-1zM0 13h1v1h-1zM7 13h1v1h-1zM13 13h1v1h-1zM0 14h1v1h-1zM13 14h1v1h-1zM0 15h1v1h-1zM13 15h1v1h-1zM0 16h1v1h-1zM13 16h1v1h-1zM0 17h14v1h-14z" fill="#000"/><path d="M2 2h1v1h-1z" fill="#fff"/></svg>
<svg style="position:absolute;left:534px;top:190px" width="14" height="18" viewBox="0 0 14 18" shape-rendering="crispEdges"><path d="M3 0h11v1h-11zM2 1h2v1h-2zM13 1h1v1h-1zM1 2h1v1h-1zM3 2h1v1h-1zM13 2h1v1h-1zM0 3h4v1h-4zM13 3h1v1h-1zM0 4h1v1h-1zM13 4h1v1h-1zM0 5h1v1h-1zM13 5h1v1h-1zM0 6h1v1h-1zM2 6h1v1h-1zM5 6h1v1h-1zM8 6h3v1h-3zM13 6h1v1h-1zM0 7h1v1h-1zM2 7h1v1h-1zM4 7h1v1h-1zM6 7h1v1h-1zM10 7h1v1h-1zM13 7h1v1h-1zM0 8h1v1h-1zM2 8h1v1h-1zM6 8h1v1h-1zM9 8h1v1h-1zM13 8h1v1h-1zM0 9h1v1h-1zM2 9h1v1h-1zM5 9h1v1h-1zM10 9h1v1h-1zM13 9h1v1h-1zM0 10h1v1h-1zM2 10h1v1h-1zM4 10h1v1h-1zM10 10h1v1h-1zM13 10h1v1h-1zM0 11h1v1h-1zM2 11h1v1h-1zM4 11h3v1h-3zM8 11h3v1h-3zM13 11h1v1h-1zM0 12h1v1h-1zM13 12h1v1h-1zM0 13h1v1h-1zM13 13h1v1h-1zM0 14h1v1h-1zM13 14h1v1h-1zM0 15h1v1h-1zM13 15h1v1h-1zM0 16h1v1h-1zM13 16h1v1h-1zM0 17h14v1h-14z" fill="#a0a0a0"/><path d="M2 2h1v1h-1z" fill="#fff"/></svg>
<svg style="position:absolute;left:581px;top:190px" width="15" height="18" viewBox="0 0 15 18" shape-rendering="crispEdges"><path d="M3 0h11v1h-11zM2 1h2v1h-2zM13 1h1v1h-1zM1 2h1v1h-1zM3 2h1v1h-1zM13 2h1v1h-1zM0 3h4v1h-4zM13 3h1v1h-1zM0 4h1v1h-1zM13 4h1v1h-1zM0 5h1v1h-1zM13 5h1v1h-1zM0 6h1v1h-1zM13 6h1v1h-1zM0 7h1v1h-1zM10 7h2v1h-2zM13 7h1v1h-1zM0 8h1v1h-1zM9 8h1v1h-1zM11 8h1v1h-1zM13 8h1v1h-1zM0 9h1v1h-1zM8 9h1v1h-1zM11 9h4v1h-4zM0 10h1v1h-1zM7 10h1v1h-1zM14 10h1v1h-1zM0 11h1v1h-1zM6 11h1v1h-1zM14 11h1v1h-1zM0 12h1v1h-1zM7 12h1v1h-1zM14 12h1v1h-1zM0 13h1v1h-1zM8 13h1v1h-1zM11 13h4v1h-4zM0 14h1v1h-1zM9 14h1v1h-1zM11 14h1v1h-1zM13 14h1v1h-1zM0 15h1v1h-1zM10 15h2v1h-2zM13 15h1v1h-1zM0 16h1v1h-1zM13 16h1v1h-1zM0 17h14v1h-14z" fill="#000"/><path d="M2 2h1v1h-1z" fill="#fff"/></svg>
<svg style="position:absolute;left:628px;top:190px" width="14" height="18" viewBox="0 0 14 18" shape-rendering="crispEdges"><path d="M3 0h11v1h-11zM2 1h2v1h-2zM13 1h1v1h-1zM1 2h1v1h-1zM3 2h1v1h-1zM13 2h1v1h-1zM0 3h4v1h-4zM13 3h1v1h-1zM0 4h1v1h-1zM13 4h1v1h-1zM0 5h1v1h-1zM5 5h2v1h-2zM13 5h1v1h-1zM0 6h1v1h-1zM4 6h4v1h-4zM13 6h1v1h-1zM0 7h1v1h-1zM3 7h6v1h-6zM13 7h1v1h-1zM0 8h1v1h-1zM5 8h2v1h-2zM13 8h1v1h-1zM0 9h1v1h-1zM5 9h2v1h-2zM13 9h1v1h-1zM0 10h1v1h-1zM5 10h2v1h-2zM13 10h1v1h-1zM0 11h1v1h-1zM5 11h2v1h-2zM13 11h1v1h-1zM0 12h1v1h-1zM5 12h6v1h-6zM13 12h1v1h-1zM0 13h1v1h-1zM5 13h6v1h-6zM13 13h1v1h-1zM0 14h1v1h-1zM13 14h1v1h-1zM0 15h1v1h-1zM13 15h1v1h-1zM0 16h1v1h-1zM13 16h1v1h-1zM0 17h14v1h-14z" fill="#000"/><path d="M2 2h1v1h-1z" fill="#fff"/></svg>
<svg style="position:absolute;left:667px;top:190px" width="14" height="18" viewBox="0 0 14 18" shape-rendering="crispEdges"><path d="M3 0h11v1h-11zM2 1h2v1h-2zM13 1h1v1h-1zM1 2h1v1h-1zM3 2h1v1h-1zM13 2h1v1h-1zM0 3h4v1h-4zM13 3h1v1h-1zM0 4h1v1h-1zM13 4h1v1h-1zM0 5h1v1h-1zM4 5h6v1h-6zM13 5h1v1h-1zM0 6h1v1h-1zM4 6h6v1h-6zM13 6h1v1h-1zM0 7h1v1h-1zM8 7h2v1h-2zM13 7h1v1h-1zM0 8h1v1h-1zM8 8h2v1h-2zM13 8h1v1h-1zM0 9h1v1h-1zM8 9h2v1h-2zM13 9h1v1h-1zM0 10h1v1h-1zM8 10h2v1h-2zM13 10h1v1h-1zM0 11h1v1h-1zM6 11h6v1h-6zM13 11h1v1h-1zM0 12h1v1h-1zM7 12h4v1h-4zM13 12h1v1h-1zM0 13h1v1h-1zM8 13h2v1h-2zM13 13h1v1h-1zM0 14h1v1h-1zM13 14h1v1h-1zM0 15h1v1h-1zM13 15h1v1h-1zM0 16h1v1h-1zM13 16h1v1h-1zM0 17h14v1h-14z" fill="#000"/><path d="M2 2h1v1h-1z" fill="#fff"/></svg>
<svg style="position:absolute;left:713px;top:192px" width="15" height="13" viewBox="0 0 15 13" shape-rendering="crispEdges"><path d="M3 0h3v1h-3zM9 0h3v1h-3zM3 1h3v1h-3zM9 1h3v1h-3zM3 2h3v1h-3zM9 2h3v1h-3zM2 3h11v1h-11zM2 4h11v1h-11zM1 5h13v1h-13zM0 6h6v1h-6zM7 6h8v1h-8zM0 7h6v1h-6zM7 7h8v1h-8zM0 8h15v1h-15zM0 9h5v1h-5zM10 9h5v1h-5zM0 10h5v1h-5zM10 10h5v1h-5zM0 11h5v1h-5zM10 11h5v1h-5zM0 12h5v1h-5zM10 12h5v1h-5z" fill="#000"/></svg>
<svg style="position:absolute;left:752px;top:191px" width="15" height="17" viewBox="0 0 15 17" shape-rendering="crispEdges"><path d="M3 0h3v1h-3zM9 0h3v1h-3zM3 1h3v1h-3zM9 1h3v1h-3zM3 2h3v1h-3zM9 2h3v1h-3zM2 3h11v1h-11zM2 4h11v1h-11zM1 5h13v1h-13zM0 6h6v1h-6zM7 6h8v1h-8zM0 7h6v1h-6zM7 7h8v1h-8zM0 8h15v1h-15zM0 9h5v1h-5zM10 9h5v1h-5zM0 10h5v1h-5zM10 10h5v1h-5zM0 11h5v1h-5zM10 11h5v1h-5zM0 12h5v1h-5zM10 12h5v1h-5zM3 15h2v1h-2zM7 15h2v1h-2zM11 15h2v1h-2zM3 16h2v1h-2zM7 16h2v1h-2zM11 16h2v1h-2z" fill="#000"/></svg>
<svg style="position:absolute;left:794px;top:188px" width="24" height="22" viewBox="0 0 24 22" shape-rendering="crispEdges"><path d="M6 0h18v1h-18zM5 1h1v1h-1zM22 1h1v1h-1zM4 2h1v1h-1zM20 2h1v1h-1zM3 3h1v1h-1zM19 3h1v1h-1zM3 4h1v1h-1zM6 4h1v1h-1zM9 4h1v1h-1zM11 4h1v1h-1zM14 4h1v1h-1zM17 4h1v1h-1zM20 4h1v1h-1zM3 5h1v1h-1zM5 5h1v1h-1zM7 5h1v1h-1zM9 5h1v1h-1zM11 5h1v1h-1zM13 5h1v1h-1zM15 5h1v1h-1zM17 5h1v1h-1zM20 5h1v1h-1zM3 6h1v1h-1zM5 6h1v1h-1zM7 6h1v1h-1zM9 6h1v1h-1zM11 6h1v1h-1zM13 6h1v1h-1zM15 6h1v1h-1zM17 6h1v1h-1zM20 6h1v1h-1zM3 7h1v1h-1zM6 7h1v1h-1zM9 7h1v1h-1zM11 7h1v1h-1zM14 7h1v1h-1zM17 7h1v1h-1zM20 7h1v1h-1zM3 8h1v1h-1zM20 8h1v1h-1zM4 9h1v1h-1zM21 9h1v1h-1zM4 10h1v1h-1zM21 10h1v1h-1zM4 11h1v1h-1zM21 11h1v1h-1zM4 12h1v1h-1zM21 12h1v1h-1zM5 13h1v1h-1zM22 13h1v1h-1zM5 14h1v1h-1zM22 14h1v1h-1zM5 15h1v1h-1zM22 15h1v1h-1zM5 16h1v1h-1zM22 16h1v1h-1zM5 17h1v1h-1zM22 17h1v1h-1zM4 18h1v1h-1zM21 18h1v1h-1zM4 19h1v1h-1zM21 19h1v1h-1zM3 20h1v1h-1zM20 20h1v1h-1zM2 21h18v1h-18z" fill="#000"/><path d="M12 11h2v1h-2zM11 14h3v1h-3zM12 15h2v1h-2zM12 16h2v1h-2zM11 17h4v1h-4zM11 18h4v1h-4z" fill="#808080"/></svg>
<svg style="position:absolute;left:831px;top:198px;" width="8" height="4" viewBox="0 0 8 4" shape-rendering="crispEdges"><path d="M0 0h8v1H7v1H6v1H5v1H3V3H2V2H1V1H0z" fill="#000"/></svg>
<svg style="position:absolute;left:857px;top:186px" width="26" height="25" viewBox="0 0 26 25" shape-rendering="crispEdges"><path d="M6 2h16v1h-16zM5 3h2v1h-2zM21 3h3v1h-3zM4 4h1v1h-1zM6 4h1v1h-1zM21 4h1v1h-1zM23 4h2v1h-2zM3 5h4v1h-4zM20 5h1v1h-1zM24 5h1v1h-1zM3 6h1v1h-1zM19 6h1v1h-1zM23 6h1v1h-1zM3 7h1v1h-1zM18 7h1v1h-1zM22 7h1v1h-1zM3 8h1v1h-1zM17 8h1v1h-1zM21 8h1v1h-1zM3 9h1v1h-1zM16 9h1v1h-1zM20 9h2v1h-2zM3 10h1v1h-1zM15 10h1v1h-1zM19 10h1v1h-1zM21 10h1v1h-1zM3 11h1v1h-1zM14 11h1v1h-1zM18 11h1v1h-1zM21 11h1v1h-1zM3 12h1v1h-1zM13 12h1v1h-1zM17 12h1v1h-1zM21 12h1v1h-1zM3 13h1v1h-1zM12 13h1v1h-1zM16 13h1v1h-1zM21 13h1v1h-1zM3 14h1v1h-1zM11 14h1v1h-1zM15 14h1v1h-1zM21 14h1v1h-1zM3 15h1v1h-1zM14 15h1v1h-1zM21 15h1v1h-1zM3 16h1v1h-1zM13 16h1v1h-1zM21 16h1v1h-1zM3 17h1v1h-1zM10 17h2v1h-2zM21 17h1v1h-1zM3 18h1v1h-1zM21 18h1v1h-1zM3 19h1v1h-1zM21 19h1v1h-1zM3 20h1v1h-1zM21 20h1v1h-1zM3 21h1v1h-1zM21 21h1v1h-1zM3 22h1v1h-1zM21 22h1v1h-1zM3 23h1v1h-1zM21 23h1v1h-1zM3 24h19v1h-19z" fill="#000"/><path d="M5 4h1v1h-1zM11 16h1v1h-1z" fill="#fff"/><path d="M22 4h1v1h-1zM21 5h3v1h-3zM20 6h3v1h-3zM19 7h3v1h-3zM18 8h3v1h-3zM17 9h3v1h-3zM16 10h3v1h-3zM15 11h3v1h-3zM14 12h3v1h-3zM13 13h3v1h-3zM12 14h3v1h-3zM12 15h2v1h-2z" fill="#9a9a9a"/><path d="M6 7h2v1h-2zM9 7h8v1h-8zM6 8h2v1h-2zM6 11h2v1h-2zM9 11h4v1h-4zM6 12h2v1h-2zM6 15h2v1h-2zM9 15h2v1h-2zM16 15h4v1h-4zM6 16h2v1h-2zM6 19h2v1h-2zM9 19h11v1h-11zM6 20h2v1h-2z" fill="#808080"/></svg>
<div style="left:1108px;top:188px;width:35px;height:35px;background:#f0f0f0;box-shadow:inset 1px 1px 0 #696969, inset 2px 2px 0 #fff, inset -1px -1px 0 #696969"></div>
<svg style="position:absolute;left:1118px;top:197px" width="16" height="19" viewBox="0 0 16 19" shape-rendering="crispEdges"><path d="M3 0h4v1h-4zM9 0h4v1h-4zM3 1h10v1h-10zM1 2h14v1h-14zM0 3h1v1h-1zM3 3h10v1h-10zM15 3h1v1h-1zM1 4h14v1h-14zM3 5h10v1h-10zM1 6h14v1h-14zM0 7h1v1h-1zM3 7h10v1h-10zM15 7h1v1h-1zM1 8h14v1h-14zM3 9h10v1h-10zM1 10h14v1h-14zM0 11h1v1h-1zM3 11h10v1h-10zM15 11h1v1h-1zM1 12h14v1h-14zM3 13h10v1h-10zM1 14h14v1h-14zM0 15h1v1h-1zM3 15h10v1h-10zM15 15h1v1h-1zM1 16h14v1h-14zM3 17h10v1h-10zM3 18h10v1h-10z" fill="#000"/></svg>
<div style="left:1144px;top:188px;width:35px;height:35px;background:#f0f0f0;box-shadow:inset 1px 1px 0 #fff, inset -1px -1px 0 #696969, inset -2px -2px 0 #a0a0a0"></div>
<div class="t" style="left:961.5px;width:400px;text-align:center;top:199.84px;font-size:12px;line-height:12px;font-weight:400;color:#a0a0a0;font-family:'Liberation Sans',sans-serif;">1</div>
<div style="left:1108px;top:260px;width:35px;height:35px;background:#f0f0f0;box-shadow:inset 1px 1px 0 #fff, inset -1px -1px 0 #696969"></div>
<div style="left:1144px;top:260px;width:35px;height:35px;background:#f0f0f0;box-shadow:inset 1px 1px 0 #fff, inset -1px -1px 0 #696969"></div>
<div style="left:1108px;top:297px;width:35px;height:35px;background:#f0f0f0;box-shadow:inset 1px 1px 0 #fff, inset -1px -1px 0 #696969"></div>
<div style="left:1144px;top:297px;width:35px;height:35px;background:#f0f0f0;box-shadow:inset 1px 1px 0 #fff, inset -1px -1px 0 #696969"></div>
<div style="left:1108px;top:334px;width:35px;height:35px;background:#f0f0f0;box-shadow:inset 1px 1px 0 #fff, inset -1px -1px 0 #696969"></div>
<div style="left:1144px;top:334px;width:35px;height:35px;background:#f0f0f0;box-shadow:inset 1px 1px 0 #fff, inset -1px -1px 0 #696969"></div>
<div style="left:1108px;top:371px;width:35px;height:35px;background:#f0f0f0;box-shadow:inset 1px 1px 0 #fff, inset -1px -1px 0 #696969"></div>
<div style="left:1144px;top:371px;width:35px;height:35px;background:#f0f0f0;box-shadow:inset 1px 1px 0 #fff, inset -1px -1px 0 #696969"></div>
<div style="left:1108px;top:408px;width:35px;height:35px;background:#f0f0f0;box-shadow:inset 1px 1px 0 #fff, inset -1px -1px 0 #696969"></div>
<div style="left:1144px;top:408px;width:35px;height:35px;background:#f0f0f0;box-shadow:inset 1px 1px 0 #fff, inset -1px -1px 0 #696969, inset -2px -2px 0 #a0a0a0"></div>
<svg style="position:absolute;left:1116px;top:269px" width="24" height="17" viewBox="0 0 24 17" shape-rendering="crispEdges"><path d="M4 0h9v1h-9zM1 1h3v1h-3zM13 1h3v1h-3zM0 2h1v1h-1zM16 2h1v1h-1zM0 3h1v1h-1zM16 3h1v1h-1zM0 4h4v1h-4zM13 4h4v1h-4zM0 5h1v1h-1zM4 5h9v1h-9zM16 5h1v1h-1zM0 6h1v1h-1zM16 6h6v1h-6zM0 7h1v1h-1zM16 7h1v1h-1zM21 7h1v1h-1zM0 8h1v1h-1zM11 8h1v1h-1zM16 8h2v1h-2zM21 8h1v1h-1zM0 9h1v1h-1zM10 9h1v1h-1zM12 9h1v1h-1zM16 9h1v1h-1zM21 9h1v1h-1zM0 10h1v1h-1zM9 10h1v1h-1zM13 10h3v1h-3zM19 10h1v1h-1zM21 10h1v1h-1zM0 11h1v1h-1zM10 11h1v1h-1zM18 11h1v1h-1zM20 11h1v1h-1zM0 12h1v1h-1zM11 12h2v1h-2zM17 12h1v1h-1zM0 13h1v1h-1zM13 13h4v1h-4zM0 14h1v1h-1zM16 14h1v1h-1zM1 15h3v1h-3zM13 15h3v1h-3zM4 16h9v1h-9z" fill="#a0a0a0"/></svg>
<svg style="position:absolute;left:1152px;top:269px" width="24" height="17" viewBox="0 0 24 17" shape-rendering="crispEdges"><path d="M4 0h9v1h-9zM1 1h3v1h-3zM13 1h3v1h-3zM0 2h1v1h-1zM16 2h1v1h-1zM0 3h1v1h-1zM16 3h1v1h-1zM0 4h4v1h-4zM13 4h4v1h-4zM0 5h1v1h-1zM4 5h9v1h-9zM16 5h1v1h-1zM0 6h1v1h-1zM16 6h1v1h-1zM0 7h1v1h-1zM11 7h11v1h-11zM0 8h1v1h-1zM11 8h1v1h-1zM21 8h1v1h-1zM0 9h1v1h-1zM12 9h1v1h-1zM20 9h1v1h-1zM0 10h1v1h-1zM13 10h1v1h-1zM19 10h1v1h-1zM0 11h1v1h-1zM14 11h1v1h-1zM18 11h1v1h-1zM0 12h1v1h-1zM15 12h1v1h-1zM17 12h1v1h-1zM0 13h1v1h-1zM16 13h1v1h-1zM0 14h1v1h-1zM16 14h1v1h-1zM1 15h3v1h-3zM13 15h3v1h-3zM4 16h9v1h-9z" fill="#a0a0a0"/></svg>
<svg style="position:absolute;left:1113px;top:314px" width="27" height="13" viewBox="0 0 27 13" shape-rendering="crispEdges"><path d="M25 0h2v1h-2zM7 1h1v1h-1zM10 1h1v1h-1zM13 1h1v1h-1zM18 1h9v1h-9zM6 2h9v1h-9zM25 2h2v1h-2zM0 3h20v1h-20zM25 3h2v1h-2zM0 4h20v1h-20zM25 4h2v1h-2zM9 5h3v1h-3zM25 5h2v1h-2zM9 6h3v1h-3zM18 6h9v1h-9zM9 7h3v1h-3zM25 7h2v1h-2zM0 8h20v1h-20zM25 8h2v1h-2zM0 9h20v1h-20zM25 9h2v1h-2zM6 10h9v1h-9zM25 10h2v1h-2zM18 11h9v1h-9zM25 12h2v1h-2z" fill="#a0a0a0"/></svg>
<svg style="position:absolute;left:1149px;top:314px" width="27" height="13" viewBox="0 0 27 13" shape-rendering="crispEdges"><path d="M25 0h2v1h-2zM7 1h1v1h-1zM10 1h1v1h-1zM13 1h1v1h-1zM18 1h9v1h-9zM6 2h9v1h-9zM25 2h2v1h-2zM0 3h20v1h-20zM25 3h2v1h-2zM0 4h20v1h-20zM25 4h2v1h-2zM9 5h3v1h-3zM25 5h2v1h-2zM9 6h3v1h-3zM18 6h9v1h-9zM9 7h3v1h-3zM25 7h2v1h-2zM0 8h20v1h-20zM25 8h2v1h-2zM0 9h20v1h-20zM25 9h2v1h-2zM6 10h9v1h-9zM25 10h2v1h-2zM18 11h9v1h-9zM25 12h2v1h-2z" fill="#a0a0a0"/></svg>
<svg style="position:absolute;left:1115px;top:340px" width="22" height="24" viewBox="0 0 22 24" shape-rendering="crispEdges"><path d="M0 0h16v1h-16zM0 1h1v1h-1zM15 1h2v1h-2zM0 2h1v1h-1zM4 2h1v1h-1zM15 2h1v1h-1zM17 2h1v1h-1zM0 3h1v1h-1zM5 3h5v1h-5zM12 3h2v1h-2zM15 3h1v1h-1zM18 3h1v1h-1zM0 4h1v1h-1zM15 4h1v1h-1zM19 4h1v1h-1zM0 5h1v1h-1zM5 5h4v1h-4zM12 5h1v1h-1zM15 5h1v1h-1zM20 5h1v1h-1zM0 6h1v1h-1zM15 6h7v1h-7zM0 7h1v1h-1zM4 7h1v1h-1zM21 7h1v1h-1zM0 8h1v1h-1zM5 8h6v1h-6zM21 8h1v1h-1zM0 9h1v1h-1zM21 9h1v1h-1zM0 10h1v1h-1zM5 10h6v1h-6zM12 10h3v1h-3zM21 10h1v1h-1zM0 11h1v1h-1zM21 11h1v1h-1zM0 12h1v1h-1zM5 12h4v1h-4zM12 12h6v1h-6zM21 12h1v1h-1zM0 13h1v1h-1zM21 13h1v1h-1zM0 14h1v1h-1zM21 14h1v1h-1zM0 15h1v1h-1zM6 15h4v1h-4zM12 15h5v1h-5zM21 15h1v1h-1zM0 16h1v1h-1zM7 16h2v1h-2zM13 16h2v1h-2zM17 16h1v1h-1zM21 16h1v1h-1zM0 17h1v1h-1zM7 17h2v1h-2zM13 17h2v1h-2zM17 17h2v1h-2zM21 17h1v1h-1zM0 18h1v1h-1zM7 18h2v1h-2zM13 18h2v1h-2zM18 18h1v1h-1zM21 18h1v1h-1zM0 19h1v1h-1zM7 19h2v1h-2zM13 19h2v1h-2zM17 19h2v1h-2zM21 19h1v1h-1zM0 20h1v1h-1zM7 20h2v1h-2zM13 20h2v1h-2zM17 20h1v1h-1zM21 20h1v1h-1zM0 21h1v1h-1zM6 21h4v1h-4zM12 21h5v1h-5zM21 21h1v1h-1zM0 22h1v1h-1zM21 22h1v1h-1zM0 23h22v1h-22z" fill="#a0a0a0"/></svg>
<svg style="position:absolute;left:1153px;top:342px" width="19" height="20" viewBox="0 0 19 20" shape-rendering="crispEdges"><path d="M3 0h13v1h-13zM3 1h1v1h-1zM15 1h1v1h-1zM4 2h1v1h-1zM14 2h1v1h-1zM5 3h1v1h-1zM13 3h1v1h-1zM6 4h1v1h-1zM12 4h1v1h-1zM7 5h1v1h-1zM11 5h1v1h-1zM8 6h1v1h-1zM10 6h1v1h-1zM9 7h1v1h-1zM0 11h1v1h-1zM6 11h1v1h-1zM12 11h1v1h-1zM18 11h1v1h-1zM0 12h1v1h-1zM6 12h1v1h-1zM12 12h1v1h-1zM18 12h1v1h-1zM0 13h1v1h-1zM6 13h1v1h-1zM12 13h1v1h-1zM18 13h1v1h-1zM0 14h1v1h-1zM6 14h1v1h-1zM12 14h1v1h-1zM18 14h1v1h-1zM0 15h1v1h-1zM3 15h1v1h-1zM6 15h1v1h-1zM9 15h1v1h-1zM12 15h1v1h-1zM15 15h1v1h-1zM18 15h1v1h-1zM0 16h1v1h-1zM3 16h1v1h-1zM6 16h1v1h-1zM9 16h1v1h-1zM12 16h1v1h-1zM15 16h1v1h-1zM18 16h1v1h-1zM0 17h1v1h-1zM3 17h1v1h-1zM6 17h1v1h-1zM9 17h1v1h-1zM12 17h1v1h-1zM15 17h1v1h-1zM18 17h1v1h-1zM0 18h19v1h-19zM0 19h19v1h-19z" fill="#a0a0a0"/></svg>
<svg style="position:absolute;left:1110px;top:377px" width="32" height="24" viewBox="0 0 32 24" shape-rendering="crispEdges"><path d="M5 0h16v1h-16zM5 1h1v1h-1zM20 1h2v1h-2zM5 2h1v1h-1zM8 2h1v1h-1zM13 2h1v1h-1zM18 2h1v1h-1zM20 2h1v1h-1zM22 2h1v1h-1zM5 3h1v1h-1zM8 3h1v1h-1zM12 3h1v1h-1zM14 3h1v1h-1zM18 3h1v1h-1zM20 3h1v1h-1zM23 3h1v1h-1zM5 4h1v1h-1zM8 4h1v1h-1zM12 4h1v1h-1zM14 4h1v1h-1zM18 4h1v1h-1zM20 4h1v1h-1zM24 4h1v1h-1zM5 5h1v1h-1zM8 5h1v1h-1zM13 5h1v1h-1zM18 5h1v1h-1zM20 5h1v1h-1zM25 5h1v1h-1zM5 6h1v1h-1zM20 6h7v1h-7zM5 7h1v1h-1zM8 7h1v1h-1zM13 7h1v1h-1zM18 7h1v1h-1zM23 7h1v1h-1zM26 7h1v1h-1zM3 8h1v1h-1zM5 8h1v1h-1zM7 8h1v1h-1zM9 8h1v1h-1zM13 8h1v1h-1zM17 8h1v1h-1zM19 8h1v1h-1zM22 8h1v1h-1zM24 8h1v1h-1zM26 8h1v1h-1zM28 8h1v1h-1zM2 9h2v1h-2zM5 9h1v1h-1zM7 9h1v1h-1zM9 9h1v1h-1zM13 9h1v1h-1zM17 9h1v1h-1zM19 9h1v1h-1zM22 9h1v1h-1zM24 9h1v1h-1zM26 9h1v1h-1zM28 9h2v1h-2zM1 10h1v1h-1zM3 10h1v1h-1zM5 10h1v1h-1zM8 10h1v1h-1zM13 10h1v1h-1zM18 10h1v1h-1zM23 10h1v1h-1zM26 10h1v1h-1zM28 10h1v1h-1zM30 10h1v1h-1zM0 11h1v1h-1zM3 11h1v1h-1zM5 11h1v1h-1zM26 11h1v1h-1zM28 11h1v1h-1zM31 11h1v1h-1zM1 12h1v1h-1zM3 12h1v1h-1zM5 12h1v1h-1zM8 12h1v1h-1zM13 12h1v1h-1zM18 12h1v1h-1zM23 12h1v1h-1zM26 12h1v1h-1zM28 12h1v1h-1zM30 12h1v1h-1zM2 13h2v1h-2zM5 13h1v1h-1zM8 13h1v1h-1zM12 13h1v1h-1zM14 13h1v1h-1zM17 13h1v1h-1zM19 13h1v1h-1zM23 13h1v1h-1zM26 13h1v1h-1zM28 13h2v1h-2zM3 14h1v1h-1zM5 14h1v1h-1zM8 14h1v1h-1zM12 14h1v1h-1zM14 14h1v1h-1zM17 14h1v1h-1zM19 14h1v1h-1zM23 14h1v1h-1zM26 14h1v1h-1zM28 14h1v1h-1zM5 15h1v1h-1zM8 15h1v1h-1zM13 15h1v1h-1zM18 15h1v1h-1zM23 15h1v1h-1zM26 15h1v1h-1zM5 16h1v1h-1zM26 16h1v1h-1zM5 17h1v1h-1zM9 17h2v1h-2zM14 17h1v1h-1zM17 17h3v1h-3zM22 17h1v1h-1zM26 17h1v1h-1zM5 18h1v1h-1zM9 18h1v1h-1zM11 18h1v1h-1zM13 18h1v1h-1zM15 18h1v1h-1zM18 18h1v1h-1zM21 18h1v1h-1zM23 18h1v1h-1zM26 18h1v1h-1zM5 19h1v1h-1zM9 19h1v1h-1zM11 19h1v1h-1zM13 19h1v1h-1zM15 19h1v1h-1zM18 19h1v1h-1zM21 19h1v1h-1zM23 19h1v1h-1zM26 19h1v1h-1zM5 20h1v1h-1zM9 20h1v1h-1zM11 20h1v1h-1zM13 20h3v1h-3zM18 20h1v1h-1zM21 20h3v1h-3zM26 20h1v1h-1zM5 21h1v1h-1zM9 21h2v1h-2zM13 21h1v1h-1zM15 21h1v1h-1zM18 21h1v1h-1zM21 21h1v1h-1zM23 21h1v1h-1zM26 21h1v1h-1zM5 22h1v1h-1zM26 22h1v1h-1zM5 23h22v1h-22z" fill="#a0a0a0"/></svg>
<svg style="position:absolute;left:1151px;top:377px" width="22" height="22" viewBox="0 0 22 22" shape-rendering="crispEdges"><path d="M4 0h18v1h-18zM3 1h1v1h-1zM20 1h1v1h-1zM2 2h1v1h-1zM19 2h1v1h-1zM1 3h1v1h-1zM18 3h1v1h-1zM1 4h1v1h-1zM4 4h1v1h-1zM7 4h1v1h-1zM9 4h1v1h-1zM12 4h1v1h-1zM15 4h1v1h-1zM18 4h1v1h-1zM1 5h1v1h-1zM3 5h1v1h-1zM5 5h1v1h-1zM7 5h1v1h-1zM9 5h1v1h-1zM11 5h1v1h-1zM13 5h1v1h-1zM15 5h1v1h-1zM18 5h1v1h-1zM1 6h1v1h-1zM3 6h1v1h-1zM5 6h1v1h-1zM7 6h1v1h-1zM9 6h1v1h-1zM11 6h1v1h-1zM13 6h1v1h-1zM15 6h1v1h-1zM18 6h1v1h-1zM1 7h1v1h-1zM4 7h1v1h-1zM7 7h1v1h-1zM9 7h1v1h-1zM12 7h1v1h-1zM15 7h1v1h-1zM18 7h1v1h-1zM1 8h1v1h-1zM18 8h1v1h-1zM2 9h1v1h-1zM19 9h1v1h-1zM2 10h1v1h-1zM19 10h1v1h-1zM2 11h1v1h-1zM19 11h1v1h-1zM2 12h1v1h-1zM19 12h1v1h-1zM3 13h1v1h-1zM20 13h1v1h-1zM3 14h1v1h-1zM20 14h1v1h-1zM3 15h1v1h-1zM20 15h1v1h-1zM3 16h1v1h-1zM20 16h1v1h-1zM3 17h1v1h-1zM20 17h1v1h-1zM2 18h1v1h-1zM19 18h1v1h-1zM1 19h1v1h-1zM19 19h1v1h-1zM0 20h1v1h-1zM18 20h1v1h-1zM0 21h18v1h-18z" fill="#a0a0a0"/></svg>
<svg style="position:absolute;left:1109px;top:410px" width="29" height="26" viewBox="0 0 29 26" shape-rendering="crispEdges"><path d="M12 7h11v1h-11zM11 8h2v1h-2zM22 8h1v1h-1zM10 9h1v1h-1zM12 9h1v1h-1zM22 9h1v1h-1zM9 10h4v1h-4zM22 10h1v1h-1zM9 11h1v1h-1zM22 11h1v1h-1zM9 12h1v1h-1zM22 12h1v1h-1zM9 13h1v1h-1zM22 13h6v1h-6zM9 14h1v1h-1zM27 14h1v1h-1zM9 15h1v1h-1zM17 15h1v1h-1zM23 15h1v1h-1zM27 15h1v1h-1zM9 16h1v1h-1zM16 16h1v1h-1zM18 16h1v1h-1zM27 16h1v1h-1zM9 17h1v1h-1zM15 17h1v1h-1zM19 17h3v1h-3zM25 17h1v1h-1zM27 17h1v1h-1zM9 18h1v1h-1zM16 18h1v1h-1zM24 18h1v1h-1zM26 18h1v1h-1zM9 19h1v1h-1zM17 19h2v1h-2zM23 19h1v1h-1zM9 20h1v1h-1zM19 20h4v1h-4zM9 21h1v1h-1zM22 21h1v1h-1zM9 22h1v1h-1zM22 22h1v1h-1zM9 23h1v1h-1zM22 23h1v1h-1zM9 24h14v1h-14z" fill="#a0a0a0"/><path d="M11 9h1v1h-1z" fill="#fff"/></svg>
<div style="left:1154px;top:421px;width:1px;height:8px;background:#a8b0c0"></div>
<div style="left:1154px;top:430px;width:1px;height:1px;background:#a8b0c0"></div>
<svg style="position:absolute;left:1161px;top:424px" width="7" height="4" viewBox="0 0 7 4" shape-rendering="crispEdges"><path d="M0 0h7v1h-7zM1 1h5v1h-5zM2 2h3v1h-3zM3 3h1v1h-1z" fill="#808080"/></svg>
<svg style="position:absolute;left:1194px;top:189px" width="6" height="9" viewBox="0 0 6 9" shape-rendering="crispEdges"><path d="M0 0h1v1h-1zM0 1h2v1h-2zM0 2h1v1h-1zM2 2h1v1h-1zM0 3h1v1h-1zM3 3h1v1h-1zM0 4h1v1h-1zM4 4h1v1h-1zM0 5h1v1h-1zM3 5h1v1h-1zM0 6h1v1h-1zM2 6h1v1h-1zM0 7h2v1h-2zM0 8h1v1h-1z" fill="#707070"/></svg>
<svg style="position:absolute;left:1212px;top:189px" width="6" height="9" viewBox="0 0 6 9" shape-rendering="crispEdges"><path d="M5 0h1v1h-1zM4 1h2v1h-2zM3 2h1v1h-1zM5 2h1v1h-1zM2 3h1v1h-1zM5 3h1v1h-1zM1 4h1v1h-1zM5 4h1v1h-1zM2 5h1v1h-1zM5 5h1v1h-1zM3 6h1v1h-1zM5 6h1v1h-1zM4 7h2v1h-2zM5 8h1v1h-1z" fill="#404040"/></svg>
<svg style="position:absolute;left:1201px;top:184px" width="10" height="18" viewBox="0 0 10 18" shape-rendering="crispEdges"><path d="M2 0h6v1h-6zM1 1h8v1h-8zM0 2h4v1h-4zM6 2h4v1h-4zM0 3h3v1h-3zM7 3h3v1h-3zM0 4h3v1h-3zM7 4h3v1h-3zM0 5h3v1h-3zM7 5h3v1h-3zM0 6h3v1h-3zM7 6h3v1h-3zM0 7h3v1h-3zM7 7h3v1h-3zM0 8h3v1h-3zM7 8h3v1h-3zM0 9h3v1h-3zM7 9h3v1h-3zM0 10h3v1h-3zM7 10h3v1h-3zM0 11h3v1h-3zM7 11h3v1h-3zM0 12h3v1h-3zM7 12h3v1h-3zM0 13h3v1h-3zM7 13h3v1h-3zM0 14h3v1h-3zM7 14h3v1h-3zM0 15h4v1h-4zM6 15h4v1h-4zM1 16h8v1h-8zM2 17h6v1h-6z" fill="#000"/></svg>
<svg style="position:absolute;left:1192px;top:222px" width="28" height="20" viewBox="0 0 28 20" shape-rendering="crispEdges"><path d="M5 0h9v1h-9zM17 0h10v1h-10zM5 1h9v1h-9zM17 1h10v1h-10zM2 2h26v1h-26zM2 3h1v1h-1zM4 3h1v1h-1zM6 3h1v1h-1zM8 3h1v1h-1zM10 3h1v1h-1zM12 3h1v1h-1zM14 3h1v1h-1zM16 3h1v1h-1zM18 3h1v1h-1zM20 3h1v1h-1zM22 3h1v1h-1zM24 3h1v1h-1zM27 3h1v1h-1zM2 4h1v1h-1zM27 4h1v1h-1zM0 5h3v1h-3zM5 5h2v1h-2zM27 5h1v1h-1zM2 6h1v1h-1zM5 6h2v1h-2zM11 6h3v1h-3zM16 6h3v1h-3zM21 6h3v1h-3zM27 6h1v1h-1zM2 7h1v1h-1zM27 7h1v1h-1zM0 8h3v1h-3zM5 8h2v1h-2zM27 8h1v1h-1zM2 9h1v1h-1zM5 9h2v1h-2zM11 9h6v1h-6zM27 9h1v1h-1zM2 10h1v1h-1zM11 10h6v1h-6zM27 10h1v1h-1zM0 11h3v1h-3zM5 11h2v1h-2zM11 11h6v1h-6zM27 11h1v1h-1zM2 12h1v1h-1zM5 12h2v1h-2zM11 12h6v1h-6zM21 12h4v1h-4zM27 12h1v1h-1zM2 13h1v1h-1zM11 13h6v1h-6zM21 13h4v1h-4zM27 13h1v1h-1zM0 14h3v1h-3zM5 14h2v1h-2zM11 14h6v1h-6zM21 14h4v1h-4zM27 14h1v1h-1zM2 15h1v1h-1zM5 15h2v1h-2zM27 15h1v1h-1zM2 16h1v1h-1zM26 16h2v1h-2zM2 17h3v1h-3zM6 17h1v1h-1zM8 17h1v1h-1zM10 17h1v1h-1zM12 17h1v1h-1zM14 17h1v1h-1zM16 17h1v1h-1zM18 17h10v1h-10zM2 18h1v1h-1zM4 18h1v1h-1zM6 18h1v1h-1zM8 18h1v1h-1zM10 18h1v1h-1zM12 18h1v1h-1zM14 18h1v1h-1zM16 18h1v1h-1zM18 18h1v1h-1zM2 19h3v1h-3zM6 19h11v1h-11z" fill="#000"/></svg>
<svg style="position:absolute;left:1196px;top:256px" width="22" height="26" viewBox="0 0 22 26" shape-rendering="crispEdges"><path d="M4 0h1v1h-1zM3 1h2v1h-2zM4 2h1v1h-1zM7 2h3v1h-3zM4 3h1v1h-1zM9 3h1v1h-1zM4 4h1v1h-1zM9 4h1v1h-1zM7 5h5v1h-5zM8 6h3v1h-3zM9 7h1v1h-1zM0 10h21v1h-21zM0 11h1v1h-1zM6 11h1v1h-1zM12 11h1v1h-1zM18 11h1v1h-1zM0 12h1v1h-1zM3 12h1v1h-1zM6 12h1v1h-1zM9 12h1v1h-1zM12 12h1v1h-1zM15 12h1v1h-1zM18 12h1v1h-1zM0 13h1v1h-1zM2 13h1v1h-1zM4 13h1v1h-1zM6 13h1v1h-1zM8 13h1v1h-1zM10 13h1v1h-1zM12 13h1v1h-1zM14 13h1v1h-1zM16 13h1v1h-1zM18 13h1v1h-1zM0 14h1v1h-1zM2 14h1v1h-1zM4 14h1v1h-1zM6 14h1v1h-1zM8 14h1v1h-1zM10 14h1v1h-1zM12 14h1v1h-1zM14 14h1v1h-1zM16 14h1v1h-1zM18 14h1v1h-1zM0 15h1v1h-1zM2 15h1v1h-1zM4 15h1v1h-1zM6 15h1v1h-1zM8 15h1v1h-1zM10 15h1v1h-1zM12 15h1v1h-1zM14 15h1v1h-1zM16 15h1v1h-1zM18 15h1v1h-1zM0 16h1v1h-1zM3 16h1v1h-1zM6 16h1v1h-1zM9 16h1v1h-1zM12 16h1v1h-1zM15 16h1v1h-1zM18 16h1v1h-1zM0 17h1v1h-1zM6 17h1v1h-1zM12 17h1v1h-1zM18 17h1v1h-1zM0 18h21v1h-21zM1 21h2v1h-2zM5 21h3v1h-3zM10 21h2v1h-2zM13 21h3v1h-3zM17 21h3v1h-3zM1 22h1v1h-1zM3 22h1v1h-1zM5 22h1v1h-1zM9 22h1v1h-1zM13 22h1v1h-1zM18 22h1v1h-1zM1 23h2v1h-2zM5 23h3v1h-3zM10 23h1v1h-1zM13 23h3v1h-3zM18 23h1v1h-1zM1 24h1v1h-1zM3 24h1v1h-1zM5 24h1v1h-1zM11 24h1v1h-1zM13 24h1v1h-1zM18 24h1v1h-1zM1 25h1v1h-1zM3 25h1v1h-1zM5 25h3v1h-3zM9 25h2v1h-2zM13 25h3v1h-3zM18 25h1v1h-1z" fill="#000"/></svg>
<svg style="position:absolute;left:1194px;top:294px" width="25" height="25" viewBox="0 0 25 25" shape-rendering="crispEdges"><path d="M18 0h1v1h-1zM18 1h1v1h-1zM18 2h1v1h-1zM18 3h1v1h-1zM16 4h5v1h-5zM16 5h1v1h-1zM20 5h1v1h-1zM16 6h1v1h-1zM20 6h1v1h-1zM16 7h1v1h-1zM20 7h1v1h-1zM16 8h1v1h-1zM20 8h1v1h-1zM16 9h1v1h-1zM20 9h1v1h-1zM16 10h1v1h-1zM20 10h1v1h-1zM16 11h5v1h-5zM10 12h1v1h-1zM18 12h1v1h-1zM9 13h1v1h-1zM18 13h1v1h-1zM8 14h1v1h-1zM17 14h3v1h-3zM2 15h6v1h-6zM11 15h14v1h-14zM2 16h1v1h-1zM17 16h3v1h-3zM2 17h1v1h-1zM18 17h1v1h-1zM2 18h1v1h-1zM15 18h8v1h-8zM2 19h1v1h-1zM18 19h1v1h-1zM2 20h1v1h-1zM15 20h8v1h-8zM2 21h1v1h-1zM18 21h1v1h-1zM2 22h1v1h-1zM18 22h1v1h-1zM2 23h1v1h-1zM18 23h1v1h-1zM0 24h6v1h-6zM16 24h6v1h-6z" fill="#000"/></svg>
<div style="left:1202px;top:340px;width:2px;height:11px;background:#000"></div>
<div style="left:1207px;top:340px;width:2px;height:11px;background:#000"></div>
<svg style="position:absolute;left:1209px;top:369px" width="6" height="11" viewBox="0 0 6 11" shape-rendering="crispEdges"><path d="M0 0h1v1h-1zM0 1h2v1h-2zM0 2h3v1h-3zM0 3h4v1h-4zM0 4h5v1h-5zM0 5h6v1h-6zM0 6h5v1h-5zM0 7h4v1h-4zM0 8h3v1h-3zM0 9h2v1h-2zM0 10h1v1h-1z" fill="#000"/></svg>
<svg style="position:absolute;left:1195px;top:382px" width="24" height="11" viewBox="0 0 24 11" shape-rendering="crispEdges"><path d="M10 0h1v1h-1zM12 0h3v1h-3zM9 1h9v1h-9zM0 2h23v1h-23zM0 3h23v1h-23zM11 4h5v1h-5zM0 5h23v1h-23zM0 6h23v1h-23zM11 7h5v1h-5zM0 8h23v1h-23zM0 9h23v1h-23zM8 10h9v1h-9z" fill="#000"/></svg>
<svg style="position:absolute;left:1230px;top:381px;" width="7" height="4" viewBox="0 0 7 4" shape-rendering="crispEdges"><path d="M0 0h7v1H6v1H5v1H4v1H3V3H2V2H1V1H0z" fill="#000"/></svg>
<svg style="position:absolute;left:1194px;top:414px" width="22" height="14" viewBox="0 0 22 14" shape-rendering="crispEdges"><path d="M12 0h4v1h-4zM7 1h3v1h-3zM11 1h2v1h-2zM15 1h3v1h-3zM8 2h2v1h-2zM13 2h2v1h-2zM18 2h1v1h-1zM5 3h1v1h-1zM8 3h2v1h-2zM14 3h1v1h-1zM18 3h1v1h-1zM5 4h1v1h-1zM8 4h2v1h-2zM15 4h1v1h-1zM18 4h2v1h-2zM5 5h5v1h-5zM13 5h2v1h-2zM17 5h2v1h-2zM5 6h5v1h-5zM11 6h1v1h-1zM13 6h1v1h-1zM15 6h1v1h-1zM18 6h1v1h-1zM20 6h1v1h-1zM9 7h1v1h-1zM11 7h1v1h-1zM13 7h1v1h-1zM18 7h1v1h-1zM10 8h1v1h-1zM12 8h1v1h-1zM9 9h1v1h-1zM11 9h1v1h-1zM13 9h1v1h-1zM8 10h1v1h-1zM10 10h1v1h-1zM12 10h1v1h-1zM14 10h1v1h-1zM7 11h1v1h-1zM9 11h1v1h-1zM13 11h1v1h-1zM15 11h1v1h-1zM6 12h2v1h-2zM9 12h1v1h-1zM14 12h1v1h-1zM16 12h1v1h-1zM6 13h2v1h-2zM15 13h2v1h-2z" fill="#000"/><path d="M15 3h1v1h-1z" fill="#fff"/></svg>
<div style="left:387px;top:321px;width:468px;height:353px;border-radius:7px 7px 6px 6px;box-shadow:0 0 6px 1px rgba(0,0,0,.45), 2px 5px 14px 4px rgba(0,0,0,.35);background:transparent"></div>
<div style="left:387px;top:321px;width:468px;height:353px;border-radius:7px 7px 6px 6px;background:radial-gradient(ellipse 90px 26px at 60px 18px, rgba(240,248,255,.95) 0%, rgba(240,248,255,.6) 55%, rgba(240,248,255,0) 100%), linear-gradient(180deg, rgba(255,255,255,0) 0px, rgba(255,255,255,0) 26px, #dcebfa 34px, #e2eefb 100px, #bedaf6 112px), linear-gradient(90deg,#c9e0f8 0px,#bcdaf8 150px,#b6d6f7 260px,#c4def8 340px,#d6e8fa 420px,#cfe3f8 468px);border:1px solid #283441;box-sizing:border-box;box-shadow:inset 0 0 0 1px rgba(255,255,255,.55)"></div>
<div class="t" style="left:395.5px;top:329.84px;font-size:12px;line-height:12px;font-weight:400;color:#000;font-family:'Liberation Sans',sans-serif;">ROM image loading</div>
<div style="left:801px;top:321px;width:47px;height:20px;border-radius:0 0 4px 4px;background:linear-gradient(180deg,#eeb0a6 0%,#e39a8e 40%,#d07060 50%,#c6452e 52%,#c84a32 78%,#dc806a 100%);border:1px solid #4a2624;box-sizing:border-box;box-shadow:inset 0 0 0 1px rgba(255,255,255,.45)"></div>
<svg style="position:absolute;left:820px;top:326px" width="11" height="9" viewBox="0 0 11 9" shape-rendering="crispEdges"><path d="M1 0h3v1h-3zM7 0h3v1h-3zM0 1h1v1h-1zM4 1h1v1h-1zM6 1h1v1h-1zM10 1h1v1h-1zM1 2h1v1h-1zM5 2h1v1h-1zM9 2h1v1h-1zM2 3h1v1h-1zM8 3h1v1h-1zM3 4h1v1h-1zM7 4h1v1h-1zM2 5h1v1h-1zM8 5h1v1h-1zM1 6h1v1h-1zM5 6h1v1h-1zM9 6h1v1h-1zM0 7h1v1h-1zM4 7h1v1h-1zM6 7h1v1h-1zM10 7h1v1h-1zM1 8h3v1h-3zM7 8h3v1h-3z" fill="#6a3a36"/><path d="M1 1h3v1h-3zM7 1h3v1h-3zM2 2h3v1h-3zM6 2h3v1h-3zM3 3h5v1h-5zM4 4h3v1h-3zM3 5h5v1h-5zM2 6h3v1h-3zM6 6h3v1h-3zM1 7h3v1h-3zM7 7h3v1h-3z" fill="#ffffff"/></svg>
<div style="left:394px;top:350px;width:454px;height:317px;background:#f0f0f0;border:1px solid #5d6a78;box-sizing:border-box;border-radius:1px;box-shadow:0 0 0 1px rgba(255,255,255,.6)"></div>
<div style="left:396px;top:358px;width:450px;height:169px;border:1px solid #fff;box-sizing:border-box;width:451px;height:170px"></div>
<div style="left:395px;top:357px;width:451px;height:170px;border:1px solid #a0a0a0;box-sizing:border-box"></div>
<svg style="position:absolute;left:400px;top:365px;shape-rendering:auto" width="12" height="12" viewBox="0 0 12 12" shape-rendering="crispEdges"><circle cx="6" cy="6" r="5.5" fill="#fff"/><path d="M2.46 9.54A5 5 0 0 1 9.54 2.46" stroke="#6a6a6a" stroke-width="1.3" fill="none"/><path d="M9.54 2.46A5 5 0 0 1 2.46 9.54" stroke="#e4e4e4" stroke-width="1" fill="none"/></svg>
<div class="t" style="left:417.5px;top:365.44px;font-size:12px;line-height:12px;font-weight:400;color:#000;font-family:'Liberation Sans',sans-serif;">Read via ATA</div>
<svg style="position:absolute;left:400px;top:385px;shape-rendering:auto" width="12" height="12" viewBox="0 0 12 12" shape-rendering="crispEdges"><circle cx="6" cy="6" r="5.5" fill="#fff"/><path d="M2.46 9.54A5 5 0 0 1 9.54 2.46" stroke="#6a6a6a" stroke-width="1.3" fill="none"/><path d="M9.54 2.46A5 5 0 0 1 2.46 9.54" stroke="#e4e4e4" stroke-width="1" fill="none"/><circle cx="6" cy="6" r="2" fill="#000"/></svg>
<div class="t" style="left:417.5px;top:385.34px;font-size:12px;line-height:12px;font-weight:400;color:#000;font-family:'Liberation Sans',sans-serif;">Read via Boot Code</div>
<div class="t" style="right:492.5px;top:385.34px;font-size:12px;line-height:12px;font-weight:400;color:#000;font-family:'Liberation Sans',sans-serif;letter-spacing:0.2px">COM port baud rate</div>
<div class="t" style="right:576.8px;top:412.84px;font-size:12px;line-height:12px;font-weight:400;color:#000;font-family:'Liberation Sans',sans-serif;letter-spacing:0.26px">Minimal image size (0 = autodetect)</div>
<div class="t" style="right:577px;top:433.34px;font-size:12px;line-height:12px;font-weight:400;color:#000;font-family:'Liberation Sans',sans-serif;">ROM type</div>
<svg style="position:absolute;left:400px;top:458px;shape-rendering:auto" width="12" height="12" viewBox="0 0 12 12" shape-rendering="crispEdges"><circle cx="6" cy="6" r="5.5" fill="#fff"/><path d="M2.46 9.54A5 5 0 0 1 9.54 2.46" stroke="#6a6a6a" stroke-width="1.3" fill="none"/><path d="M9.54 2.46A5 5 0 0 1 2.46 9.54" stroke="#e4e4e4" stroke-width="1" fill="none"/></svg>
<div class="t" style="left:417.5px;top:457.54px;font-size:12px;line-height:12px;font-weight:400;color:#000;font-family:'Liberation Sans',sans-serif;">Read via terminal (Sys File)</div>
<div class="t" style="right:532px;top:456.74px;font-size:12px;line-height:12px;font-weight:400;color:#000;font-family:'Liberation Sans',sans-serif;">Volume</div>
<div class="t" style="right:460px;top:456.74px;font-size:12px;line-height:12px;font-weight:400;color:#000;font-family:'Liberation Sans',sans-serif;">File ID</div>
<div class="t" style="right:403.5px;top:456.74px;font-size:12px;line-height:12px;font-weight:400;color:#000;font-family:'Liberation Sans',sans-serif;">Copy</div>
<svg style="position:absolute;left:400px;top:502px;shape-rendering:auto" width="12" height="12" viewBox="0 0 12 12" shape-rendering="crispEdges"><circle cx="6" cy="6" r="5.5" fill="#fff"/><path d="M2.46 9.54A5 5 0 0 1 9.54 2.46" stroke="#6a6a6a" stroke-width="1.3" fill="none"/><path d="M9.54 2.46A5 5 0 0 1 2.46 9.54" stroke="#e4e4e4" stroke-width="1" fill="none"/></svg>
<div class="t" style="left:417.5px;top:502.04px;font-size:12px;line-height:12px;font-weight:400;color:#000;font-family:'Liberation Sans',sans-serif;">Read from file</div>
<div style="left:755px;top:379px;width:84px;height:22px;background:#fff;box-shadow:inset 1px 1px 0 #a0a0a0, inset 2px 2px 0 #696969, inset -1px -1px 0 #fff, inset -2px -2px 0 #e3e3e3"></div>
<div style="left:758px;top:382px;width:62px;height:17px;background:#3399ff;outline:1px dotted #000;outline-offset:-1px"></div>
<div class="t" style="left:759px;top:385.84px;font-size:12px;line-height:12px;font-weight:400;color:#fff;font-family:'Liberation Sans',sans-serif;">57600</div>
<div style="left:821px;top:381px;width:17px;height:19px;background:#f0f0f0;box-shadow:inset 1px 1px 0 #fff, inset -1px -1px 0 #696969, inset -2px -2px 0 #a0a0a0"></div>
<svg style="position:absolute;left:825px;top:388px" width="7" height="4" viewBox="0 0 7 4" shape-rendering="crispEdges"><path d="M0 0h7v1h-7zM1 1h5v1h-5zM2 2h3v1h-3zM3 3h1v1h-1z" fill="#000"/></svg>
<div style="left:683px;top:403px;width:156px;height:22px;background:#fff;box-shadow:inset 1px 1px 0 #a0a0a0, inset 2px 2px 0 #696969, inset -1px -1px 0 #fff, inset -2px -2px 0 #e3e3e3"></div>
<div class="t" style="left:687px;top:407.84px;font-size:12px;line-height:12px;font-weight:400;color:#000;font-family:'Liberation Sans',sans-serif;">0x00100000</div>
<div style="left:820px;top:405px;width:18px;height:19px;background:#f0f0f0;box-shadow:inset 1px 1px 0 #fff, inset -1px -1px 0 #696969, inset -2px -2px 0 #a0a0a0"></div>
<svg style="position:absolute;left:823px;top:410px" width="11" height="7" viewBox="0 0 11 7" shape-rendering="crispEdges"><path d="M0 0h2v1h-2zM3 0h2v1h-2zM0 1h2v1h-2zM3 1h2v1h-2zM0 2h2v1h-2zM3 2h2v1h-2zM0 3h5v1h-5zM0 4h2v1h-2zM3 4h2v1h-2zM0 5h2v1h-2zM3 5h2v1h-2zM0 6h2v1h-2zM3 6h2v1h-2z" fill="#000"/><path d="M7 0h3v1h-3zM7 1h3v1h-3zM7 2h3v1h-3zM7 3h3v1h-3zM6 4h5v1h-5zM7 5h3v1h-3zM8 6h1v1h-1z" fill="#e00000"/></svg>
<div style="left:683px;top:427px;width:156px;height:22px;background:#fff;box-shadow:inset 1px 1px 0 #a0a0a0, inset 2px 2px 0 #696969, inset -1px -1px 0 #fff, inset -2px -2px 0 #e3e3e3"></div>
<div class="t" style="left:687px;top:433.34px;font-size:12px;line-height:12px;font-weight:400;color:#000;font-family:'Liberation Sans',sans-serif;">autodetect</div>
<div style="left:821px;top:429px;width:17px;height:19px;background:#f0f0f0;box-shadow:inset 1px 1px 0 #fff, inset -1px -1px 0 #696969, inset -2px -2px 0 #a0a0a0"></div>
<svg style="position:absolute;left:825px;top:436px" width="7" height="4" viewBox="0 0 7 4" shape-rendering="crispEdges"><path d="M0 0h7v1h-7zM1 1h5v1h-5zM2 2h3v1h-3zM3 3h1v1h-1z" fill="#000"/></svg>
<div style="left:651px;top:471px;width:60px;height:22px;background:#fff;box-shadow:inset 1px 1px 0 #a0a0a0, inset 2px 2px 0 #696969, inset -1px -1px 0 #fff, inset -2px -2px 0 #e3e3e3"></div>
<div class="t" style="left:654px;top:476.34px;font-size:12px;line-height:12px;font-weight:400;color:#6d6d6d;font-family:'Liberation Sans',sans-serif;">0x0A</div>
<div style="left:692px;top:473px;width:18px;height:19px;background:#f0f0f0;box-shadow:inset 1px 1px 0 #fff, inset -1px -1px 0 #696969, inset -2px -2px 0 #a0a0a0"></div>
<svg style="position:absolute;left:695px;top:478px" width="11" height="7" viewBox="0 0 11 7" shape-rendering="crispEdges"><path d="M0 0h2v1h-2zM3 0h2v1h-2zM0 1h2v1h-2zM3 1h2v1h-2zM0 2h2v1h-2zM3 2h2v1h-2zM0 3h5v1h-5zM0 4h2v1h-2zM3 4h2v1h-2zM0 5h2v1h-2zM3 5h2v1h-2zM0 6h2v1h-2zM3 6h2v1h-2z" fill="#000"/><path d="M7 0h3v1h-3zM7 1h3v1h-3zM7 2h3v1h-3zM7 3h3v1h-3zM6 4h5v1h-5zM7 5h3v1h-3zM8 6h1v1h-1z" fill="#e00000"/></svg>
<div style="left:715px;top:471px;width:68px;height:22px;background:#fff;box-shadow:inset 1px 1px 0 #a0a0a0, inset 2px 2px 0 #696969, inset -1px -1px 0 #fff, inset -2px -2px 0 #e3e3e3"></div>
<div class="t" style="left:718px;top:476.34px;font-size:12px;line-height:12px;font-weight:400;color:#6d6d6d;font-family:'Liberation Sans',sans-serif;">0x032A</div>
<div style="left:764px;top:473px;width:18px;height:19px;background:#f0f0f0;box-shadow:inset 1px 1px 0 #fff, inset -1px -1px 0 #696969, inset -2px -2px 0 #a0a0a0"></div>
<svg style="position:absolute;left:767px;top:478px" width="11" height="7" viewBox="0 0 11 7" shape-rendering="crispEdges"><path d="M0 0h2v1h-2zM3 0h2v1h-2zM0 1h2v1h-2zM3 1h2v1h-2zM0 2h2v1h-2zM3 2h2v1h-2zM0 3h5v1h-5zM0 4h2v1h-2zM3 4h2v1h-2zM0 5h2v1h-2zM3 5h2v1h-2zM0 6h2v1h-2zM3 6h2v1h-2z" fill="#000"/><path d="M7 0h3v1h-3zM7 1h3v1h-3zM7 2h3v1h-3zM7 3h3v1h-3zM6 4h5v1h-5zM7 5h3v1h-3zM8 6h1v1h-1z" fill="#e00000"/></svg>
<div style="left:787px;top:471px;width:52px;height:22px;background:#fff;box-shadow:inset 1px 1px 0 #a0a0a0, inset 2px 2px 0 #696969, inset -1px -1px 0 #fff, inset -2px -2px 0 #e3e3e3"></div>
<div class="t" style="left:790px;top:476.34px;font-size:12px;line-height:12px;font-weight:400;color:#6d6d6d;font-family:'Liberation Sans',sans-serif;">0x00</div>
<div style="left:820px;top:473px;width:18px;height:19px;background:#f0f0f0;box-shadow:inset 1px 1px 0 #fff, inset -1px -1px 0 #696969, inset -2px -2px 0 #a0a0a0"></div>
<svg style="position:absolute;left:823px;top:478px" width="11" height="7" viewBox="0 0 11 7" shape-rendering="crispEdges"><path d="M0 0h2v1h-2zM3 0h2v1h-2zM0 1h2v1h-2zM3 1h2v1h-2zM0 2h2v1h-2zM3 2h2v1h-2zM0 3h5v1h-5zM0 4h2v1h-2zM3 4h2v1h-2zM0 5h2v1h-2zM3 5h2v1h-2zM0 6h2v1h-2zM3 6h2v1h-2z" fill="#000"/><path d="M7 0h3v1h-3zM7 1h3v1h-3zM7 2h3v1h-3zM7 3h3v1h-3zM6 4h5v1h-5zM7 5h3v1h-3zM8 6h1v1h-1z" fill="#e00000"/></svg>
<div style="left:396px;top:537px;width:450px;height:88px;border:1px solid #fff;box-sizing:border-box;width:451px;height:89px"></div>
<div style="left:395px;top:536px;width:451px;height:89px;border:1px solid #a0a0a0;box-sizing:border-box"></div>
<div class="t" style="left:403.5px;top:531.84px;font-size:12px;line-height:12px;font-weight:400;color:#000;font-family:'Liberation Sans',sans-serif;background:#f0f0f0;padding:0 1px;margin-left:-1px">Location</div>
<div style="left:399px;top:547px;width:96px;height:22px;background:repeating-conic-gradient(#ffffff 0 25%, #f0f0f0 0 50%) 0 0/2px 2px;box-shadow:inset 1px 1px 0 #696969, inset 2px 2px 0 #a0a0a0, inset -1px -1px 0 #fff"></div>
<div class="t" style="left:406.5px;top:552.34px;font-size:12px;line-height:12px;font-weight:400;color:#000;font-family:'Liberation Sans',sans-serif;letter-spacing:0.25px">HDD profile file</div>
<div style="left:500px;top:547px;width:1px;height:23px;background:#a0a0a0"></div>
<div style="left:501px;top:547px;width:1px;height:23px;background:#fff"></div>
<div class="t" style="left:512.5px;top:552.34px;font-size:12px;line-height:12px;font-weight:400;color:#000;font-family:'Liberation Sans',sans-serif;">DB file</div>
<div style="left:558px;top:547px;width:1px;height:23px;background:#a0a0a0"></div>
<div style="left:559px;top:547px;width:1px;height:23px;background:#fff"></div>
<div class="t" style="left:432.5px;top:609.54px;font-size:12px;line-height:12px;font-weight:400;color:#000;font-family:'Liberation Sans',sans-serif;">File</div>
<div style="left:465px;top:600px;width:373px;height:20px;background:#fff;box-shadow:inset 1px 1px 0 #a0a0a0, inset 2px 2px 0 #696969, inset -1px -1px 0 #fff, inset -2px -2px 0 #e3e3e3"></div>
<div style="left:815px;top:602px;width:21px;height:17px;background:#f0f0f0;box-shadow:inset 1px 1px 0 #fff, inset -1px -1px 0 #696969, inset -2px -2px 0 #a0a0a0"></div>
<div style="left:819px;top:609px;width:2px;height:2px;background:#8a8a8a"></div>
<div style="left:824px;top:609px;width:2px;height:2px;background:#8a8a8a"></div>
<div style="left:829px;top:609px;width:2px;height:2px;background:#8a8a8a"></div>
<div style="left:657px;top:636px;width:87px;height:25px;background:#f0f0f0;border:1px solid #646464;box-sizing:border-box;box-shadow:inset 1px 1px 0 #fff, inset -1px -1px 0 #696969, inset -2px -2px 0 #a0a0a0"></div>
<div class="t" style="left:500px;width:400px;text-align:center;top:641.84px;font-size:12px;line-height:12px;font-weight:400;color:#000;font-family:'Liberation Sans',sans-serif;">OK</div>
<div style="left:757px;top:636px;width:87px;height:25px;background:#f0f0f0;box-shadow:inset 1px 1px 0 #fff, inset -1px -1px 0 #696969, inset -2px -2px 0 #a0a0a0"></div>
<div class="t" style="left:600px;width:400px;text-align:center;top:641.84px;font-size:12px;line-height:12px;font-weight:400;color:#000;font-family:'Liberation Sans',sans-serif;">Cancel</div>
<div style="left:0px;top:8px;width:1px;height:1003px;background:#1e3448"></div>
<div style="left:1px;top:8px;width:1px;height:1003px;background:#d8ecf8"></div>
<div style="left:1240px;top:8px;width:1px;height:1003px;background:#d8ecf8"></div>
<div style="left:1241px;top:8px;width:1px;height:1003px;background:#1e3448"></div>
<div style="left:0px;top:1010px;width:1242px;height:1px;background:#1e3448"></div>
</body></html>
